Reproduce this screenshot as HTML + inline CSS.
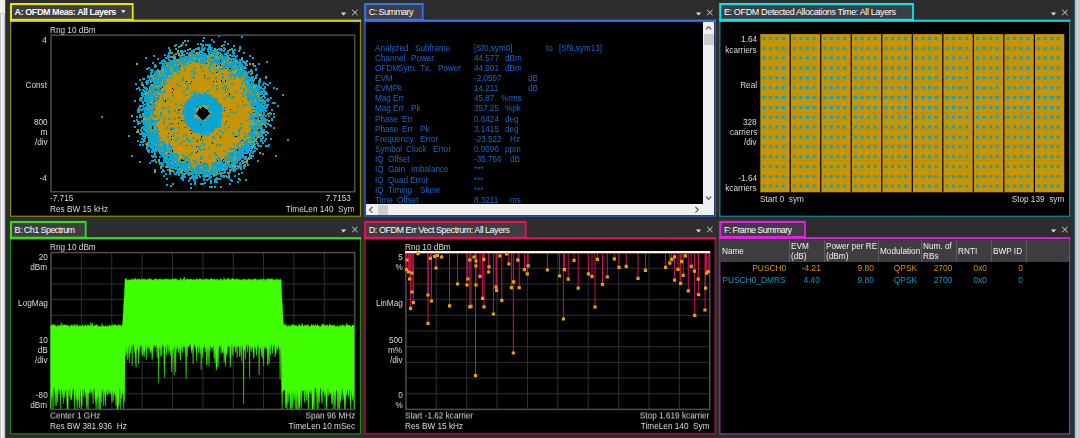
<!DOCTYPE html>
<html lang="en"><head><meta charset="utf-8"><title>OFDM measurement</title>
<style>
html,body{margin:0;padding:0;}
body{width:1080px;height:438px;overflow:hidden;background:#2d2d30;position:relative;
 font-family:"Liberation Sans",sans-serif;}
.b{position:absolute;}
.t{position:absolute;white-space:pre;font-family:"Liberation Sans",sans-serif;}
.tab{letter-spacing:-0.05px;}
svg{display:block;overflow:visible;}
</style></head><body>
<div class="b" style="left:0px;top:0px;width:4.9px;height:438px;background:linear-gradient(90deg,#bdbdbd 0%,#c4c4c4 18%,#f2f2f2 30%,#f3f3f3 66%,#c2c6c8 80%,#b8c0c4 100%);"></div>
<div class="b" style="left:0px;top:0px;width:4.9px;height:13.4px;background:linear-gradient(90deg,#f2f2f2,#ececec);"></div>
<div class="b" style="left:0px;top:13.4px;width:4.9px;height:0.9px;background:#cfcfcf;"></div>
<div class="b" style="left:4.9px;top:0px;width:1.0px;height:438px;background:#1f6272;"></div>
<div class="b" style="left:1074.1px;top:0px;width:1.0px;height:438px;background:#1f6272;"></div>
<div class="b" style="left:1075.1px;top:0px;width:4.9px;height:438px;background:linear-gradient(90deg,#b6b6b6 0%,#bcbcbc 25%,#dadada 40%,#d6d6d6 60%,#c2c2c2 75%,#c6c6c6 100%);"></div>
<svg class="b" style="left:0;top:0" width="1080" height="438" viewBox="0 0 1080 438"><rect x="10" y="19.6" width="351" height="197.20" fill="#8c8c00"/><rect x="11.15" y="19.6" width="348.7" height="196.05" fill="#000"/><rect x="10" y="19.6" width="351" height="2.3" fill="#d2d200"/><rect x="9.9" y="3.0" width="123.7" height="17.8" fill="#e6e600"/><rect x="12.0" y="5.1" width="119.8" height="14.8" fill="#3d3e45"/><rect x="9.9" y="18.8" width="123.7" height="2.1" fill="#e6e600"/></svg>
<span class="t tab" style="top:6.80px;color:#ffffff;font-size:9.0px;line-height:10px;font-weight:bold;left:14.60px;letter-spacing:-0.437px;">A: OFDM Meas: All Layers</span>
<svg class="b" style="left:338.15px;top:7.4px" width="22" height="12" viewBox="0 0 22 12"><path d="M2.85 5.4h5.4l-2.7 3.0z" fill="#dcdcdc"/><path d="M14.1 2.8l5.5 5.4M19.6 2.8l-5.5 5.4" stroke="#d6d6d6" stroke-width="1.0" fill="none"/></svg>
<svg class="b" style="left:120px;top:8.7px" width="8" height="6"><path d="M0.9 1.2h4.8l-2.4 2.9z" fill="#f4f4f4"/></svg>
<svg class="b" style="left:0;top:0" width="1080" height="438" viewBox="0 0 1080 438" shape-rendering="crispEdges">
<path d="M218 36.5h2M241 36.5h2M203 37.5h2M241 37.5h2M203 38.5h2M211 39.5h2M187 40.5h2M202 40.5h2M211 40.5h2M187 41.5h2M202 41.5h2M213 41.5h2M224 41.5h2M182 42.5h2M213 42.5h2M224 42.5h2M182 43.5h2M197 43.5h2M200 43.5h2M227 43.5h2M175 44.5h2M181 44.5h2M185 44.5h2M197 44.5h2M200 44.5h4M205 44.5h6M223 44.5h2M227 44.5h2M174 45.5h3M182 45.5h1M185 45.5h2M201 45.5h3M205 45.5h6M223 45.5h2M233 45.5h2M174 46.5h2M178 46.5h2M202 46.5h2M208 46.5h3M233 46.5h2M239 46.5h2M168 47.5h2M178 47.5h2M197 47.5h3M201 47.5h2M204 47.5h2M208 47.5h5M223 47.5h2M239 47.5h2M168 48.5h2M175 48.5h2M195 48.5h5M201 48.5h5M207 48.5h6M218 48.5h4M223 48.5h3M231 48.5h2M239 48.5h2M169 49.5h2M175 49.5h2M187 49.5h2M193 49.5h7M201 49.5h4M207 49.5h5M216 49.5h7M224 49.5h2M231 49.5h2M234 49.5h2M239 49.5h2M169 50.5h2M180 50.5h3M184 50.5h2M187 50.5h2M191 50.5h4M199 50.5h6M207 50.5h2M210 50.5h8M219 50.5h6M227 50.5h2M232 50.5h4M238 50.5h2M169 51.5h2M180 51.5h6M191 51.5h4M199 51.5h4M207 51.5h4M212 51.5h7M223 51.5h2M227 51.5h2M232 51.5h2M238 51.5h2M168 52.5h3M177 52.5h2M180 52.5h4M186 52.5h2M189 52.5h6M200 52.5h4M208 52.5h13M226 52.5h3M232 52.5h3M243 52.5h2M168 53.5h3M175 53.5h5M181 53.5h2M186 53.5h7M195 53.5h1M202 53.5h4M208 53.5h2M211 53.5h6M219 53.5h2M224 53.5h5M232 53.5h3M243 53.5h2M164 54.5h2M168 54.5h2M173 54.5h4M183 54.5h2M188 54.5h1M191 54.5h2M195 54.5h12M208 54.5h2M212 54.5h5M221 54.5h2M224 54.5h4M229 54.5h2M233 54.5h2M153 55.5h2M164 55.5h2M167 55.5h3M173 55.5h2M180 55.5h1M183 55.5h2M188 55.5h1M191 55.5h19M214 55.5h4M219 55.5h1M221 55.5h2M226 55.5h9M236 55.5h2M249 55.5h2M153 56.5h2M167 56.5h5M174 56.5h2M179 56.5h3M183 56.5h7M191 56.5h16M210 56.5h2M213 56.5h2M217 56.5h12M231 56.5h7M249 56.5h2M145 57.5h2M165 57.5h7M180 57.5h13M195 57.5h6M202 57.5h5M209 57.5h3M213 57.5h2M219 57.5h9M235 57.5h2M252 57.5h2M145 58.5h2M157 58.5h2M165 58.5h4M173 58.5h1M179 58.5h14M195 58.5h4M201 58.5h2M204 58.5h4M209 58.5h8M219 58.5h9M230 58.5h6M252 58.5h2M157 59.5h2M163 59.5h2M168 59.5h2M173 59.5h4M179 59.5h5M185 59.5h10M196 59.5h3M200 59.5h8M209 59.5h2M212 59.5h15M229 59.5h1M231 59.5h7M239 59.5h4M161 60.5h5M168 60.5h9M179 60.5h5M185 60.5h4M190 60.5h9M200 60.5h5M208 60.5h2M213 60.5h6M221 60.5h6M230 60.5h2M233 60.5h2M236 60.5h2M239 60.5h5M246 60.5h2M161 61.5h5M169 61.5h13M183 61.5h5M193 61.5h4M199 61.5h2M202 61.5h5M208 61.5h12M221 61.5h3M226 61.5h9M237 61.5h4M242 61.5h6M266 61.5h2M152 62.5h2M159 62.5h4M164 62.5h4M169 62.5h6M176 62.5h4M181 62.5h6M189 62.5h2M195 62.5h2M199 62.5h8M210 62.5h13M225 62.5h4M231 62.5h16M266 62.5h2M152 63.5h2M159 63.5h20M180 63.5h5M189 63.5h2M200 63.5h6M207 63.5h1M210 63.5h4M215 63.5h7M223 63.5h5M229 63.5h13M244 63.5h2M258 63.5h2M154 64.5h2M162 64.5h3M167 64.5h7M175 64.5h2M179 64.5h3M183 64.5h2M186 64.5h1M193 64.5h1M204 64.5h2M209 64.5h3M217 64.5h3M223 64.5h14M238 64.5h5M245 64.5h3M258 64.5h2M154 65.5h3M162 65.5h5M168 65.5h6M176 65.5h1M179 65.5h3M183 65.5h2M186 65.5h1M210 65.5h2M213 65.5h2M219 65.5h1M221 65.5h22M245 65.5h3M253 65.5h3M154 66.5h3M161 66.5h7M169 66.5h2M172 66.5h7M180 66.5h1M183 66.5h1M186 66.5h1M200 66.5h2M210 66.5h2M213 66.5h2M216 66.5h1M222 66.5h12M236 66.5h10M253 66.5h3M148 67.5h2M154 67.5h2M161 67.5h10M172 67.5h8M185 67.5h1M194 67.5h2M200 67.5h2M208 67.5h2M222 67.5h12M235 67.5h12M146 68.5h4M161 68.5h9M173 68.5h7M194 68.5h2M208 68.5h2M219 68.5h5M231 68.5h9M242 68.5h5M255 68.5h2M146 69.5h2M150 69.5h4M157 69.5h2M161 69.5h1M164 69.5h6M172 69.5h9M184 69.5h2M215 69.5h2M220 69.5h4M227 69.5h9M238 69.5h2M242 69.5h2M250 69.5h2M255 69.5h2M150 70.5h4M156 70.5h6M164 70.5h13M178 70.5h2M184 70.5h2M191 70.5h2M202 70.5h2M209 70.5h2M215 70.5h4M227 70.5h7M237 70.5h9M250 70.5h3M255 70.5h2M151 71.5h2M154 71.5h4M160 71.5h1M163 71.5h8M173 71.5h4M191 71.5h2M194 71.5h2M202 71.5h2M209 71.5h2M217 71.5h2M228 71.5h4M237 71.5h10M248 71.5h5M150 72.5h3M154 72.5h4M160 72.5h1M163 72.5h8M173 72.5h1M177 72.5h2M194 72.5h2M212 72.5h2M236 72.5h3M240 72.5h4M245 72.5h5M150 73.5h2M154 73.5h9M164 73.5h9M177 73.5h2M193 73.5h2M212 73.5h2M221 73.5h2M228 73.5h1M231 73.5h2M234 73.5h10M245 73.5h4M250 73.5h1M150 74.5h2M153 74.5h6M161 74.5h12M193 74.5h2M221 74.5h3M230 74.5h3M234 74.5h14M250 74.5h2M256 74.5h2M147 75.5h2M150 75.5h1M153 75.5h6M161 75.5h2M166 75.5h2M224 75.5h1M228 75.5h9M238 75.5h7M246 75.5h2M255 75.5h3M147 76.5h4M153 76.5h15M172 76.5h1M191 76.5h2M222 76.5h2M228 76.5h2M234 76.5h2M238 76.5h4M243 76.5h2M246 76.5h3M251 76.5h3M255 76.5h2M147 77.5h21M170 77.5h1M182 77.5h2M191 77.5h4M204 77.5h2M207 77.5h3M215 77.5h2M222 77.5h2M230 77.5h2M234 77.5h2M238 77.5h4M243 77.5h1M245 77.5h9M142 78.5h3M148 78.5h2M151 78.5h2M155 78.5h3M159 78.5h8M169 78.5h2M182 78.5h2M193 78.5h2M204 78.5h2M207 78.5h3M215 78.5h2M222 78.5h2M230 78.5h2M233 78.5h2M243 78.5h1M245 78.5h10M259 78.5h2M265 78.5h2M139 79.5h2M142 79.5h3M149 79.5h4M154 79.5h4M159 79.5h6M182 79.5h2M228 79.5h2M233 79.5h2M240 79.5h1M243 79.5h12M259 79.5h2M139 80.5h2M146 80.5h16M163 80.5h3M182 80.5h2M228 80.5h2M243 80.5h4M248 80.5h5M258 80.5h3M145 81.5h4M150 81.5h12M163 81.5h3M237 81.5h1M242 81.5h2M245 81.5h2M248 81.5h6M258 81.5h3M141 82.5h2M145 82.5h4M150 82.5h2M153 82.5h8M163 82.5h2M166 82.5h2M185 82.5h2M222 82.5h2M242 82.5h1M245 82.5h2M248 82.5h2M251 82.5h3M258 82.5h3M263 82.5h2M269 82.5h2M135 83.5h2M141 83.5h2M146 83.5h3M153 83.5h8M163 83.5h3M176 83.5h2M185 83.5h2M222 83.5h2M231 83.5h2M241 83.5h2M245 83.5h2M249 83.5h5M258 83.5h2M263 83.5h4M269 83.5h2M135 84.5h2M141 84.5h1M146 84.5h2M150 84.5h1M153 84.5h8M163 84.5h3M176 84.5h2M187 84.5h2M231 84.5h2M241 84.5h2M245 84.5h12M258 84.5h2M262 84.5h2M265 84.5h4M141 85.5h1M150 85.5h1M153 85.5h6M160 85.5h1M162 85.5h2M178 85.5h2M187 85.5h2M212 85.5h2M216 85.5h2M224 85.5h2M245 85.5h8M255 85.5h5M262 85.5h2M267 85.5h2M143 86.5h2M149 86.5h6M160 86.5h1M162 86.5h2M178 86.5h2M212 86.5h2M216 86.5h2M224 86.5h3M247 86.5h2M250 86.5h3M256 86.5h6M264 86.5h2M138 87.5h2M143 87.5h4M149 87.5h5M155 87.5h7M187 87.5h2M222 87.5h2M225 87.5h2M240 87.5h2M245 87.5h1M247 87.5h2M250 87.5h3M256 87.5h6M264 87.5h2M273 87.5h2M136 88.5h4M144 88.5h4M149 88.5h5M155 88.5h5M186 88.5h3M216 88.5h2M222 88.5h2M227 88.5h2M240 88.5h2M243 88.5h2M247 88.5h6M255 88.5h11M273 88.5h2M276 88.5h2M136 89.5h2M139 89.5h2M142 89.5h2M145 89.5h3M149 89.5h6M156 89.5h5M186 89.5h2M216 89.5h2M227 89.5h2M243 89.5h2M249 89.5h3M253 89.5h7M262 89.5h3M276 89.5h2M139 90.5h2M142 90.5h3M146 90.5h3M151 90.5h10M163 90.5h2M207 90.5h2M244 90.5h2M249 90.5h10M260 90.5h2M263 90.5h2M143 91.5h4M148 91.5h1M150 91.5h11M163 91.5h3M183 91.5h2M195 91.5h2M207 91.5h2M225 91.5h2M235 91.5h2M243 91.5h2M247 91.5h20M141 92.5h2M144 92.5h3M149 92.5h7M158 92.5h5M164 92.5h2M183 92.5h2M191 92.5h2M194 92.5h3M204 92.5h2M225 92.5h2M235 92.5h2M243 92.5h2M247 92.5h2M252 92.5h15M141 93.5h4M148 93.5h7M161 93.5h2M191 93.5h2M194 93.5h2M198 93.5h2M204 93.5h2M241 93.5h2M246 93.5h3M250 93.5h7M259 93.5h4M264 93.5h4M141 94.5h4M147 94.5h6M155 94.5h3M185 94.5h2M194 94.5h3M198 94.5h12M241 94.5h2M246 94.5h6M253 94.5h3M259 94.5h9M282 94.5h2M141 95.5h3M145 95.5h15M172 95.5h2M185 95.5h2M193 95.5h19M227 95.5h3M243 95.5h2M246 95.5h6M253 95.5h5M263 95.5h2M282 95.5h2M142 96.5h13M158 96.5h2M172 96.5h2M191 96.5h7M199 96.5h13M227 96.5h3M232 96.5h2M243 96.5h2M247 96.5h11M261 96.5h4M141 97.5h2M144 97.5h7M153 97.5h4M162 97.5h2M190 97.5h22M213 97.5h2M231 97.5h3M247 97.5h4M252 97.5h8M261 97.5h2M264 97.5h2M270 97.5h2M139 98.5h1M141 98.5h2M144 98.5h14M162 98.5h2M167 98.5h2M190 98.5h27M223 98.5h2M231 98.5h2M247 98.5h8M256 98.5h6M264 98.5h2M267 98.5h2M270 98.5h2M139 99.5h3M144 99.5h10M156 99.5h2M167 99.5h2M187 99.5h30M223 99.5h2M247 99.5h15M263 99.5h1M266 99.5h4M134 100.5h2M139 100.5h4M144 100.5h7M155 100.5h3M163 100.5h2M187 100.5h31M248 100.5h2M252 100.5h2M256 100.5h6M263 100.5h7M134 101.5h2M141 101.5h10M152 101.5h5M158 101.5h1M163 101.5h2M186 101.5h32M248 101.5h2M251 101.5h3M256 101.5h4M261 101.5h5M267 101.5h2M142 102.5h2M146 102.5h4M152 102.5h3M186 102.5h32M251 102.5h9M261 102.5h5M272 102.5h4M142 103.5h2M145 103.5h6M153 103.5h2M175 103.5h2M184 103.5h36M250 103.5h16M272 103.5h4M143 104.5h7M151 104.5h5M175 104.5h2M180 104.5h2M184 104.5h38M245 104.5h2M250 104.5h13M264 104.5h5M139 105.5h6M149 105.5h3M154 105.5h2M180 105.5h2M183 105.5h2M186 105.5h17M205 105.5h2M209 105.5h13M237 105.5h2M242 105.5h2M245 105.5h2M251 105.5h3M256 105.5h13M277 105.5h2M139 106.5h5M145 106.5h11M167 106.5h2M183 106.5h14M198 106.5h1M201 106.5h1M206 106.5h1M209 106.5h12M237 106.5h2M242 106.5h2M251 106.5h2M256 106.5h9M266 106.5h2M277 106.5h2M138 107.5h3M143 107.5h7M152 107.5h4M162 107.5h3M167 107.5h2M184 107.5h13M201 107.5h1M208 107.5h13M224 107.5h2M255 107.5h13M138 108.5h2M142 108.5h6M149 108.5h2M153 108.5h1M162 108.5h3M183 108.5h14M200 108.5h1M208 108.5h15M224 108.5h2M254 108.5h13M137 109.5h11M149 109.5h5M183 109.5h12M207 109.5h16M251 109.5h5M257 109.5h9M271 109.5h2M137 110.5h6M144 110.5h10M156 110.5h1M168 110.5h2M174 110.5h2M182 110.5h2M185 110.5h10M208 110.5h15M251 110.5h3M255 110.5h12M271 110.5h2M137 111.5h3M144 111.5h10M168 111.5h2M174 111.5h2M182 111.5h16M208 111.5h2M212 111.5h11M231 111.5h2M248 111.5h2M255 111.5h9M265 111.5h2M137 112.5h3M144 112.5h9M160 112.5h2M168 112.5h2M177 112.5h2M182 112.5h15M209 112.5h1M212 112.5h10M231 112.5h2M234 112.5h2M248 112.5h2M254 112.5h8M263 112.5h2M269 112.5h2M144 113.5h10M160 113.5h2M177 113.5h2M182 113.5h14M210 113.5h12M234 113.5h2M249 113.5h1M251 113.5h2M255 113.5h7M263 113.5h2M269 113.5h3M273 113.5h2M139 114.5h2M144 114.5h10M160 114.5h2M183 114.5h13M209 114.5h13M250 114.5h3M256 114.5h2M261 114.5h4M270 114.5h2M273 114.5h2M139 115.5h2M142 115.5h9M153 115.5h4M160 115.5h1M184 115.5h10M209 115.5h13M227 115.5h2M250 115.5h2M253 115.5h2M256 115.5h3M261 115.5h6M268 115.5h2M101 116.5h2M136 116.5h2M139 116.5h11M153 116.5h4M159 116.5h3M184 116.5h10M197 116.5h2M209 116.5h14M227 116.5h2M252 116.5h12M265 116.5h2M268 116.5h2M273 116.5h2M101 117.5h2M136 117.5h2M139 117.5h3M143 117.5h1M146 117.5h4M151 117.5h1M153 117.5h3M163 117.5h2M179 117.5h2M185 117.5h9M196 117.5h1M199 117.5h1M206 117.5h1M209 117.5h14M249 117.5h10M260 117.5h5M273 117.5h2M146 118.5h2M150 118.5h1M163 118.5h2M168 118.5h2M174 118.5h2M179 118.5h2M185 118.5h12M199 118.5h2M205 118.5h17M249 118.5h6M257 118.5h2M262 118.5h4M271 118.5h2M136 119.5h2M147 119.5h1M150 119.5h3M158 119.5h2M168 119.5h2M174 119.5h2M184 119.5h18M206 119.5h15M245 119.5h2M249 119.5h6M256 119.5h3M261 119.5h7M271 119.5h2M133 120.5h2M136 120.5h2M141 120.5h4M146 120.5h3M150 120.5h10M182 120.5h22M206 120.5h15M245 120.5h2M252 120.5h6M260 120.5h8M271 120.5h2M133 121.5h2M137 121.5h3M141 121.5h8M150 121.5h8M163 121.5h2M182 121.5h39M254 121.5h2M260 121.5h6M137 122.5h4M142 122.5h4M147 122.5h10M163 122.5h2M185 122.5h36M250 122.5h1M254 122.5h13M137 123.5h4M143 123.5h4M148 123.5h5M163 123.5h2M169 123.5h2M185 123.5h36M224 123.5h2M240 123.5h2M257 123.5h4M263 123.5h6M137 124.5h2M143 124.5h10M154 124.5h2M169 124.5h2M187 124.5h13M201 124.5h20M224 124.5h2M240 124.5h2M254 124.5h2M257 124.5h3M263 124.5h3M267 124.5h4M144 125.5h5M151 125.5h5M187 125.5h34M250 125.5h2M254 125.5h5M260 125.5h3M264 125.5h3M269 125.5h3M134 126.5h2M142 126.5h7M151 126.5h1M153 126.5h2M187 126.5h34M228 126.5h2M248 126.5h14M265 126.5h2M270 126.5h2M134 127.5h2M141 127.5h11M153 127.5h2M156 127.5h2M166 127.5h2M171 127.5h2M178 127.5h2M190 127.5h28M219 127.5h2M228 127.5h2M240 127.5h3M251 127.5h12M265 127.5h2M273 127.5h2M141 128.5h11M153 128.5h2M156 128.5h3M166 128.5h2M169 128.5h6M178 128.5h2M191 128.5h24M240 128.5h2M251 128.5h5M257 128.5h6M273 128.5h2M137 129.5h2M140 129.5h2M143 129.5h12M156 129.5h2M169 129.5h2M173 129.5h2M191 129.5h24M225 129.5h2M238 129.5h2M252 129.5h2M255 129.5h4M260 129.5h5M137 130.5h2M140 130.5h2M143 130.5h2M147 130.5h3M153 130.5h2M156 130.5h2M191 130.5h23M219 130.5h2M225 130.5h2M238 130.5h2M252 130.5h6M260 130.5h5M141 131.5h2M147 131.5h3M151 131.5h4M156 131.5h4M192 131.5h22M219 131.5h2M238 131.5h2M251 131.5h4M256 131.5h6M264 131.5h4M141 132.5h4M146 132.5h12M177 132.5h2M193 132.5h2M196 132.5h15M222 132.5h2M232 132.5h2M238 132.5h2M249 132.5h6M257 132.5h5M264 132.5h5M139 133.5h19M172 133.5h2M177 133.5h2M199 133.5h4M204 133.5h3M216 133.5h2M222 133.5h2M232 133.5h2M244 133.5h2M248 133.5h7M258 133.5h7M267 133.5h2M139 134.5h20M172 134.5h2M185 134.5h2M201 134.5h2M204 134.5h5M216 134.5h2M238 134.5h2M244 134.5h2M248 134.5h8M258 134.5h5M265 134.5h2M128 135.5h2M142 135.5h17M173 135.5h2M182 135.5h2M185 135.5h2M201 135.5h3M207 135.5h2M220 135.5h2M233 135.5h2M238 135.5h2M247 135.5h2M250 135.5h13M265 135.5h2M128 136.5h2M142 136.5h4M147 136.5h12M167 136.5h2M173 136.5h2M182 136.5h2M202 136.5h2M212 136.5h2M220 136.5h2M233 136.5h2M237 136.5h1M244 136.5h2M247 136.5h2M251 136.5h3M255 136.5h3M260 136.5h4M143 137.5h3M147 137.5h14M167 137.5h2M177 137.5h2M186 137.5h2M192 137.5h2M212 137.5h3M244 137.5h2M251 137.5h3M256 137.5h2M262 137.5h2M141 138.5h2M144 138.5h2M148 138.5h8M157 138.5h2M161 138.5h2M177 138.5h2M186 138.5h2M192 138.5h2M213 138.5h2M250 138.5h8M260 138.5h4M265 138.5h2M270 138.5h2M141 139.5h2M148 139.5h12M175 139.5h2M187 139.5h2M196 139.5h2M201 139.5h2M242 139.5h1M246 139.5h3M250 139.5h5M260 139.5h2M265 139.5h2M270 139.5h2M287 139.5h2M137 140.5h2M144 140.5h2M148 140.5h12M169 140.5h2M175 140.5h2M183 140.5h2M187 140.5h4M196 140.5h2M201 140.5h2M240 140.5h2M246 140.5h9M260 140.5h3M264 140.5h2M287 140.5h2M137 141.5h2M140 141.5h6M148 141.5h10M161 141.5h3M169 141.5h2M183 141.5h2M189 141.5h2M211 141.5h2M240 141.5h2M244 141.5h4M252 141.5h1M255 141.5h3M260 141.5h3M264 141.5h2M140 142.5h4M149 142.5h17M189 142.5h2M211 142.5h2M239 142.5h2M243 142.5h5M252 142.5h1M256 142.5h2M262 142.5h2M145 143.5h2M148 143.5h2M153 143.5h8M163 143.5h2M168 143.5h2M180 143.5h2M202 143.5h2M233 143.5h2M237 143.5h4M243 143.5h16M262 143.5h2M139 144.5h2M142 144.5h2M145 144.5h1M148 144.5h7M157 144.5h2M163 144.5h4M168 144.5h2M180 144.5h2M202 144.5h3M216 144.5h2M219 144.5h2M233 144.5h2M237 144.5h2M244 144.5h3M248 144.5h5M254 144.5h2M257 144.5h2M268 144.5h2M139 145.5h2M142 145.5h2M148 145.5h13M162 145.5h5M169 145.5h2M191 145.5h2M199 145.5h2M203 145.5h2M216 145.5h2M219 145.5h2M236 145.5h3M241 145.5h2M244 145.5h6M251 145.5h2M254 145.5h1M257 145.5h5M265 145.5h5M146 146.5h15M162 146.5h5M168 146.5h5M191 146.5h2M198 146.5h3M236 146.5h2M241 146.5h2M244 146.5h8M254 146.5h2M258 146.5h4M265 146.5h4M146 147.5h3M150 147.5h4M155 147.5h6M162 147.5h5M168 147.5h2M171 147.5h2M198 147.5h2M208 147.5h2M238 147.5h2M241 147.5h11M254 147.5h2M146 148.5h2M150 148.5h17M170 148.5h2M198 148.5h2M203 148.5h2M208 148.5h2M229 148.5h7M238 148.5h15M254 148.5h4M146 149.5h4M152 149.5h5M158 149.5h11M170 149.5h2M198 149.5h4M203 149.5h2M229 149.5h8M238 149.5h10M251 149.5h2M256 149.5h2M147 150.5h3M151 150.5h11M163 150.5h9M200 150.5h2M223 150.5h2M235 150.5h2M238 150.5h3M242 150.5h10M253 150.5h3M147 151.5h3M151 151.5h6M159 151.5h3M163 151.5h4M169 151.5h3M223 151.5h2M233 151.5h10M245 151.5h4M250 151.5h6M148 152.5h2M151 152.5h2M154 152.5h2M159 152.5h6M169 152.5h2M172 152.5h2M191 152.5h2M214 152.5h2M229 152.5h6M236 152.5h2M239 152.5h10M250 152.5h4M154 153.5h2M159 153.5h6M167 153.5h1M169 153.5h2M172 153.5h5M191 153.5h2M214 153.5h2M228 153.5h3M232 153.5h2M236 153.5h12M249 153.5h2M252 153.5h2M262 153.5h2M154 154.5h2M160 154.5h6M167 154.5h12M182 154.5h2M189 154.5h2M215 154.5h2M226 154.5h15M242 154.5h2M250 154.5h2M262 154.5h2M131 155.5h2M151 155.5h5M161 155.5h13M175 155.5h4M182 155.5h3M189 155.5h2M209 155.5h2M215 155.5h2M226 155.5h2M229 155.5h15M250 155.5h4M275 155.5h2M131 156.5h2M151 156.5h6M159 156.5h2M162 156.5h13M176 156.5h3M183 156.5h2M186 156.5h2M200 156.5h3M209 156.5h2M217 156.5h2M224 156.5h2M227 156.5h1M229 156.5h6M236 156.5h11M249 156.5h5M275 156.5h2M152 157.5h2M155 157.5h2M159 157.5h2M163 157.5h5M169 157.5h9M184 157.5h4M201 157.5h2M217 157.5h3M224 157.5h7M232 157.5h2M236 157.5h11M249 157.5h3M163 158.5h11M175 158.5h3M183 158.5h3M188 158.5h2M200 158.5h2M216 158.5h4M225 158.5h3M229 158.5h4M236 158.5h6M243 158.5h5M250 158.5h2M154 159.5h2M163 159.5h15M182 159.5h8M200 159.5h2M216 159.5h2M219 159.5h2M222 159.5h1M224 159.5h2M227 159.5h6M235 159.5h6M244 159.5h6M151 160.5h5M163 160.5h7M171 160.5h6M179 160.5h2M184 160.5h4M193 160.5h2M219 160.5h2M224 160.5h9M235 160.5h5M241 160.5h3M257 160.5h2M139 161.5h2M151 161.5h3M155 161.5h2M158 161.5h2M163 161.5h11M176 161.5h2M179 161.5h7M188 161.5h3M193 161.5h4M198 161.5h1M216 161.5h7M224 161.5h3M231 161.5h8M241 161.5h5M257 161.5h2M139 162.5h2M149 162.5h2M155 162.5h2M158 162.5h17M176 162.5h6M185 162.5h2M188 162.5h3M195 162.5h2M203 162.5h2M211 162.5h1M214 162.5h3M218 162.5h1M220 162.5h3M229 162.5h1M231 162.5h7M239 162.5h2M244 162.5h4M149 163.5h2M159 163.5h4M166 163.5h5M173 163.5h15M190 163.5h1M193 163.5h2M201 163.5h8M211 163.5h6M219 163.5h6M226 163.5h4M231 163.5h7M239 163.5h5M246 163.5h2M159 164.5h5M166 164.5h11M179 164.5h13M193 164.5h2M197 164.5h2M201 164.5h7M211 164.5h25M239 164.5h3M244 164.5h2M247 164.5h2M161 165.5h3M166 165.5h21M188 165.5h3M197 165.5h12M212 165.5h11M225 165.5h7M236 165.5h5M244 165.5h2M247 165.5h2M162 166.5h2M165 166.5h1M168 166.5h15M184 166.5h4M190 166.5h2M195 166.5h7M203 166.5h6M212 166.5h11M224 166.5h8M236 166.5h6M245 166.5h1M165 167.5h1M168 167.5h7M176 167.5h2M179 167.5h9M190 167.5h3M195 167.5h5M202 167.5h7M210 167.5h4M215 167.5h13M229 167.5h5M237 167.5h5M243 167.5h2M160 168.5h2M169 168.5h10M180 168.5h5M186 168.5h4M191 168.5h3M195 168.5h6M202 168.5h7M211 168.5h3M215 168.5h8M224 168.5h4M231 168.5h8M240 168.5h2M243 168.5h2M154 169.5h2M162 169.5h2M167 169.5h4M175 169.5h4M180 169.5h2M183 169.5h2M186 169.5h8M195 169.5h14M211 169.5h3M215 169.5h7M224 169.5h4M229 169.5h8M240 169.5h2M154 170.5h2M162 170.5h3M167 170.5h2M173 170.5h1M177 170.5h4M183 170.5h5M189 170.5h15M206 170.5h2M209 170.5h17M229 170.5h7M161 171.5h4M173 171.5h2M176 171.5h5M182 171.5h1M184 171.5h5M191 171.5h4M197 171.5h11M209 171.5h3M214 171.5h2M217 171.5h3M224 171.5h2M229 171.5h2M233 171.5h3M161 172.5h2M169 172.5h2M173 172.5h2M176 172.5h4M182 172.5h1M185 172.5h15M201 172.5h15M219 172.5h7M229 172.5h2M241 172.5h2M165 173.5h2M169 173.5h2M174 173.5h16M191 173.5h6M198 173.5h2M201 173.5h24M229 173.5h1M238 173.5h2M241 173.5h2M165 174.5h2M169 174.5h2M174 174.5h3M178 174.5h2M182 174.5h4M187 174.5h3M191 174.5h3M195 174.5h2M198 174.5h2M202 174.5h11M215 174.5h4M228 174.5h2M238 174.5h2M163 175.5h2M178 175.5h2M181 175.5h4M188 175.5h2M192 175.5h8M202 175.5h4M208 175.5h3M215 175.5h2M220 175.5h7M228 175.5h2M234 175.5h2M163 176.5h2M181 176.5h5M191 176.5h7M199 176.5h2M202 176.5h4M208 176.5h4M213 176.5h2M220 176.5h10M234 176.5h2M180 177.5h6M189 177.5h9M199 177.5h2M204 177.5h2M209 177.5h3M216 177.5h2M223 177.5h2M226 177.5h4M166 178.5h2M180 178.5h4M189 178.5h9M203 178.5h2M208 178.5h3M215 178.5h6M228 178.5h2M238 178.5h2M166 179.5h2M182 179.5h2M189 179.5h2M193 179.5h3M203 179.5h2M206 179.5h4M214 179.5h7M230 179.5h2M238 179.5h3M245 179.5h2M182 180.5h2M188 180.5h2M193 180.5h2M203 180.5h2M206 180.5h2M210 180.5h2M214 180.5h3M230 180.5h3M239 180.5h2M245 180.5h2M188 181.5h2M194 181.5h2M210 181.5h2M214 181.5h4M231 181.5h2M237 181.5h2M194 182.5h2M204 182.5h2M210 182.5h2M214 182.5h4M237 182.5h2M172 183.5h2M190 183.5h2M194 183.5h2M200 183.5h6M210 183.5h2M229 183.5h2M166 184.5h2M172 184.5h2M190 184.5h2M194 184.5h2M200 184.5h4M229 184.5h2M166 185.5h2M170 185.5h2M170 186.5h2M209 186.5h4M214 186.5h2M220 186.5h2M190 187.5h2M209 187.5h4M214 187.5h2M220 187.5h2M190 188.5h2" stroke="#08a5d2" stroke-width="1" fill="none"/>
<path d="M184 40.5h2M184 41.5h2M180 45.5h2M221 45.5h2M180 46.5h2M221 46.5h2M189 48.5h2M214 48.5h2M189 49.5h2M214 49.5h2M229 49.5h2M177 50.5h2M229 50.5h2M177 51.5h2M171 52.5h2M196 52.5h4M171 53.5h2M196 53.5h4M217 53.5h2M178 54.5h2M181 54.5h2M189 54.5h2M193 54.5h2M210 54.5h2M217 54.5h2M220 54.5h1M178 55.5h2M181 55.5h2M189 55.5h2M210 55.5h4M220 55.5h1M172 56.5h2M190 56.5h1M207 56.5h3M212 56.5h1M215 56.5h2M172 57.5h4M193 57.5h2M201 57.5h1M207 57.5h2M215 57.5h4M228 57.5h2M241 57.5h2M174 58.5h2M193 58.5h2M199 58.5h2M203 58.5h1M208 58.5h1M217 58.5h2M228 58.5h2M241 58.5h2M177 59.5h2M184 59.5h1M195 59.5h1M199 59.5h1M208 59.5h1M211 59.5h1M227 59.5h2M230 59.5h1M177 60.5h2M184 60.5h1M189 60.5h1M199 60.5h1M205 60.5h3M210 60.5h3M219 60.5h1M227 60.5h2M235 60.5h1M182 61.5h1M188 61.5h5M198 61.5h1M201 61.5h1M207 61.5h1M224 61.5h2M235 61.5h2M168 62.5h1M175 62.5h1M180 62.5h1M187 62.5h2M191 62.5h4M197 62.5h2M207 62.5h3M223 62.5h2M229 62.5h2M136 63.5h2M179 63.5h1M185 63.5h4M191 63.5h9M208 63.5h2M214 63.5h1M222 63.5h1M228 63.5h1M246 63.5h1M249 63.5h2M252 63.5h2M136 64.5h2M166 64.5h1M174 64.5h1M177 64.5h2M182 64.5h1M185 64.5h1M187 64.5h6M194 64.5h10M206 64.5h3M212 64.5h5M221 64.5h2M249 64.5h2M252 64.5h2M167 65.5h1M174 65.5h2M177 65.5h2M182 65.5h1M185 65.5h1M187 65.5h23M212 65.5h1M215 65.5h1M217 65.5h2M168 66.5h1M171 66.5h1M181 66.5h2M184 66.5h2M187 66.5h13M202 66.5h8M212 66.5h1M215 66.5h1M217 66.5h5M234 66.5h2M171 67.5h1M180 67.5h5M186 67.5h8M196 67.5h4M202 67.5h6M210 67.5h12M234 67.5h1M170 68.5h3M180 68.5h14M196 68.5h12M210 68.5h9M224 68.5h1M226 68.5h3M240 68.5h2M162 69.5h2M170 69.5h2M181 69.5h3M186 69.5h29M217 69.5h3M224 69.5h3M236 69.5h2M240 69.5h2M162 70.5h2M177 70.5h1M180 70.5h4M186 70.5h5M193 70.5h9M204 70.5h5M211 70.5h4M219 70.5h8M234 70.5h3M158 71.5h2M161 71.5h2M171 71.5h2M177 71.5h14M193 71.5h1M196 71.5h6M204 71.5h5M211 71.5h6M219 71.5h9M232 71.5h5M158 72.5h2M161 72.5h2M171 72.5h2M174 72.5h3M179 72.5h15M196 72.5h16M214 72.5h2M217 72.5h19M239 72.5h1M244 72.5h1M251 72.5h2M163 73.5h1M173 73.5h4M179 73.5h14M195 73.5h17M214 73.5h7M223 73.5h5M229 73.5h2M233 73.5h1M244 73.5h1M251 73.5h2M159 74.5h2M173 74.5h20M195 74.5h26M224 74.5h6M233 74.5h1M151 75.5h2M159 75.5h2M163 75.5h3M168 75.5h36M205 75.5h19M225 75.5h3M237 75.5h1M245 75.5h1M151 76.5h2M168 76.5h4M173 76.5h18M193 76.5h29M224 76.5h4M230 76.5h4M236 76.5h2M242 76.5h1M245 76.5h1M265 76.5h2M168 77.5h2M171 77.5h11M184 77.5h7M195 77.5h9M206 77.5h1M210 77.5h5M217 77.5h5M224 77.5h6M232 77.5h2M236 77.5h2M242 77.5h1M244 77.5h1M255 77.5h2M265 77.5h2M153 78.5h2M158 78.5h1M167 78.5h2M171 78.5h11M184 78.5h9M195 78.5h9M206 78.5h1M210 78.5h5M217 78.5h5M224 78.5h6M232 78.5h1M235 78.5h8M244 78.5h1M255 78.5h2M153 79.5h1M158 79.5h1M165 79.5h17M184 79.5h44M230 79.5h3M235 79.5h5M241 79.5h2M162 80.5h1M166 80.5h16M184 80.5h37M222 80.5h3M226 80.5h2M230 80.5h13M247 80.5h1M253 80.5h2M162 81.5h1M166 81.5h20M187 81.5h4M192 81.5h21M214 81.5h2M217 81.5h4M222 81.5h3M226 81.5h11M238 81.5h4M244 81.5h1M247 81.5h1M161 82.5h2M165 82.5h1M168 82.5h17M187 82.5h35M224 82.5h18M243 82.5h2M247 82.5h1M161 83.5h2M166 83.5h10M178 83.5h7M187 83.5h3M191 83.5h31M224 83.5h7M233 83.5h8M243 83.5h2M247 83.5h2M142 84.5h2M151 84.5h2M161 84.5h2M166 84.5h10M178 84.5h9M189 84.5h42M233 84.5h8M243 84.5h2M142 85.5h2M151 85.5h2M159 85.5h1M161 85.5h1M164 85.5h14M180 85.5h7M189 85.5h23M214 85.5h2M218 85.5h6M226 85.5h19M253 85.5h2M155 86.5h5M161 86.5h1M164 86.5h14M180 86.5h32M214 86.5h2M218 86.5h6M227 86.5h20M249 86.5h1M253 86.5h3M154 87.5h1M163 87.5h24M189 87.5h33M224 87.5h1M227 87.5h13M242 87.5h3M246 87.5h1M249 87.5h1M253 87.5h3M154 88.5h1M161 88.5h11M173 88.5h13M189 88.5h27M218 88.5h4M224 88.5h3M229 88.5h11M242 88.5h1M245 88.5h2M253 88.5h2M161 89.5h12M174 89.5h12M188 89.5h28M218 89.5h7M226 89.5h1M229 89.5h14M245 89.5h4M252 89.5h1M149 90.5h2M161 90.5h2M165 90.5h42M209 90.5h35M246 90.5h3M149 91.5h1M161 91.5h2M166 91.5h17M185 91.5h10M197 91.5h10M209 91.5h16M227 91.5h8M237 91.5h6M245 91.5h2M147 92.5h2M156 92.5h2M163 92.5h1M166 92.5h6M173 92.5h10M185 92.5h6M193 92.5h1M197 92.5h7M206 92.5h19M227 92.5h8M237 92.5h6M245 92.5h2M249 92.5h3M145 93.5h3M155 93.5h6M163 93.5h28M193 93.5h1M196 93.5h2M200 93.5h4M206 93.5h23M230 93.5h11M243 93.5h3M249 93.5h1M257 93.5h2M145 94.5h2M153 94.5h2M158 94.5h27M187 94.5h7M197 94.5h1M210 94.5h19M230 94.5h11M243 94.5h3M252 94.5h1M256 94.5h3M160 95.5h12M174 95.5h11M187 95.5h6M212 95.5h15M230 95.5h13M245 95.5h1M252 95.5h1M258 95.5h2M155 96.5h3M160 96.5h12M174 96.5h17M198 96.5h1M212 96.5h15M230 96.5h2M234 96.5h9M245 96.5h2M258 96.5h2M140 97.5h1M151 97.5h2M157 97.5h5M164 97.5h26M212 97.5h1M215 97.5h16M234 97.5h13M251 97.5h1M260 97.5h1M140 98.5h1M159 98.5h3M164 98.5h3M169 98.5h21M217 98.5h6M225 98.5h6M233 98.5h14M255 98.5h1M154 99.5h2M158 99.5h9M169 99.5h18M217 99.5h6M225 99.5h22M262 99.5h1M151 100.5h3M158 100.5h5M166 100.5h21M218 100.5h30M250 100.5h2M254 100.5h2M262 100.5h1M151 101.5h1M157 101.5h1M159 101.5h4M166 101.5h20M218 101.5h24M243 101.5h5M250 101.5h1M254 101.5h2M260 101.5h1M150 102.5h2M155 102.5h31M218 102.5h33M151 103.5h2M155 103.5h20M177 103.5h7M220 103.5h30M156 104.5h19M177 104.5h3M182 104.5h2M222 104.5h23M247 104.5h3M147 105.5h2M152 105.5h2M156 105.5h24M182 105.5h1M185 105.5h1M203 105.5h2M207 105.5h2M222 105.5h15M239 105.5h3M244 105.5h1M247 105.5h4M254 105.5h2M156 106.5h11M169 106.5h14M199 106.5h2M202 106.5h4M207 106.5h2M221 106.5h16M239 106.5h3M244 106.5h7M253 106.5h1M150 107.5h2M156 107.5h6M165 107.5h2M169 107.5h15M197 107.5h4M204 107.5h4M221 107.5h3M226 107.5h29M148 108.5h1M151 108.5h2M154 108.5h8M165 108.5h18M197 108.5h2M205 108.5h3M223 108.5h1M226 108.5h28M148 109.5h1M155 109.5h24M180 109.5h3M195 109.5h4M223 109.5h7M231 109.5h20M256 109.5h1M154 110.5h2M157 110.5h11M170 110.5h4M176 110.5h2M179 110.5h3M184 110.5h1M195 110.5h3M223 110.5h1M225 110.5h26M254 110.5h1M154 111.5h14M170 111.5h4M176 111.5h6M210 111.5h2M223 111.5h8M233 111.5h15M250 111.5h5M153 112.5h7M162 112.5h6M170 112.5h7M179 112.5h3M210 112.5h2M222 112.5h9M233 112.5h1M236 112.5h12M250 112.5h3M142 113.5h2M154 113.5h6M162 113.5h15M179 113.5h3M222 113.5h12M236 113.5h13M250 113.5h1M253 113.5h2M267 113.5h2M142 114.5h2M154 114.5h6M162 114.5h21M196 114.5h1M222 114.5h28M253 114.5h3M258 114.5h3M267 114.5h2M131 115.5h2M151 115.5h2M157 115.5h3M161 115.5h23M194 115.5h4M208 115.5h1M222 115.5h5M229 115.5h21M252 115.5h1M255 115.5h1M259 115.5h2M131 116.5h2M150 116.5h3M157 116.5h2M162 116.5h22M194 116.5h3M207 116.5h2M223 116.5h4M229 116.5h23M144 117.5h2M150 117.5h1M152 117.5h1M156 117.5h7M165 117.5h13M181 117.5h4M194 117.5h2M197 117.5h2M207 117.5h2M223 117.5h26M143 118.5h3M148 118.5h2M151 118.5h12M165 118.5h3M170 118.5h4M176 118.5h3M181 118.5h4M197 118.5h2M222 118.5h27M260 118.5h2M143 119.5h4M148 119.5h2M153 119.5h5M160 119.5h8M170 119.5h4M176 119.5h8M204 119.5h2M221 119.5h24M247 119.5h2M255 119.5h1M145 120.5h1M149 120.5h1M160 120.5h21M204 120.5h2M221 120.5h24M247 120.5h5M258 120.5h2M268 120.5h2M149 121.5h1M158 121.5h5M165 121.5h17M221 121.5h5M227 121.5h27M256 121.5h4M268 121.5h2M146 122.5h1M157 122.5h6M165 122.5h20M221 122.5h29M251 122.5h3M147 123.5h1M153 123.5h10M165 123.5h4M171 123.5h1M173 123.5h5M179 123.5h6M221 123.5h3M226 123.5h14M242 123.5h15M261 123.5h2M153 124.5h1M156 124.5h13M171 124.5h16M221 124.5h3M226 124.5h14M242 124.5h12M256 124.5h1M260 124.5h3M149 125.5h2M156 125.5h31M221 125.5h29M252 125.5h2M259 125.5h1M149 126.5h2M155 126.5h32M221 126.5h7M230 126.5h18M155 127.5h1M158 127.5h8M168 127.5h3M173 127.5h5M180 127.5h5M186 127.5h4M218 127.5h1M221 127.5h7M230 127.5h10M243 127.5h8M155 128.5h1M159 128.5h7M168 128.5h1M175 128.5h3M180 128.5h11M215 128.5h25M242 128.5h9M256 128.5h1M155 129.5h1M158 129.5h11M172 129.5h1M175 129.5h16M215 129.5h10M227 129.5h11M240 129.5h12M254 129.5h1M145 130.5h2M150 130.5h3M155 130.5h1M158 130.5h32M214 130.5h5M221 130.5h4M227 130.5h11M240 130.5h11M136 131.5h3M145 131.5h2M150 131.5h1M155 131.5h1M160 131.5h32M214 131.5h5M221 131.5h17M240 131.5h11M255 131.5h1M262 131.5h2M136 132.5h3M158 132.5h19M179 132.5h14M195 132.5h1M211 132.5h11M224 132.5h8M234 132.5h4M240 132.5h9M255 132.5h2M262 132.5h2M158 133.5h10M169 133.5h3M174 133.5h3M179 133.5h12M192 133.5h7M203 133.5h1M207 133.5h9M218 133.5h4M224 133.5h8M234 133.5h10M246 133.5h2M255 133.5h3M159 134.5h13M174 134.5h11M187 134.5h14M203 134.5h1M209 134.5h7M218 134.5h20M240 134.5h4M246 134.5h2M256 134.5h2M159 135.5h14M175 135.5h7M184 135.5h1M187 135.5h14M204 135.5h3M209 135.5h11M222 135.5h11M235 135.5h3M240 135.5h7M249 135.5h1M159 136.5h8M169 136.5h2M172 136.5h1M175 136.5h7M184 136.5h17M204 136.5h8M214 136.5h6M222 136.5h11M238 136.5h6M246 136.5h1M249 136.5h2M254 136.5h1M258 136.5h2M161 137.5h6M169 137.5h8M179 137.5h7M188 137.5h4M194 137.5h7M202 137.5h10M215 137.5h5M221 137.5h23M246 137.5h5M254 137.5h1M258 137.5h2M156 138.5h1M159 138.5h2M163 138.5h14M179 138.5h7M188 138.5h4M194 138.5h19M215 138.5h35M143 139.5h2M160 139.5h11M172 139.5h3M177 139.5h10M189 139.5h7M198 139.5h2M203 139.5h39M243 139.5h3M249 139.5h1M255 139.5h2M143 140.5h1M160 140.5h9M171 140.5h4M177 140.5h6M185 140.5h2M191 140.5h5M198 140.5h3M203 140.5h37M243 140.5h3M255 140.5h2M158 141.5h3M164 141.5h5M171 141.5h12M185 141.5h4M191 141.5h6M198 141.5h13M213 141.5h27M242 141.5h2M248 141.5h4M253 141.5h2M147 142.5h2M166 142.5h23M191 142.5h20M213 142.5h26M241 142.5h2M248 142.5h4M253 142.5h2M147 143.5h1M151 143.5h2M161 143.5h2M165 143.5h3M170 143.5h10M182 143.5h20M204 143.5h8M213 143.5h20M235 143.5h2M241 143.5h2M146 144.5h2M155 144.5h2M159 144.5h4M167 144.5h1M170 144.5h10M182 144.5h20M205 144.5h11M218 144.5h1M221 144.5h12M235 144.5h2M239 144.5h5M247 144.5h1M253 144.5h1M146 145.5h2M161 145.5h1M167 145.5h2M171 145.5h15M187 145.5h4M193 145.5h6M201 145.5h2M205 145.5h11M218 145.5h1M221 145.5h15M239 145.5h2M243 145.5h1M253 145.5h1M161 146.5h1M167 146.5h1M173 146.5h18M193 146.5h3M197 146.5h1M201 146.5h35M238 146.5h3M243 146.5h1M252 146.5h2M161 147.5h1M167 147.5h1M170 147.5h1M173 147.5h25M200 147.5h8M210 147.5h28M240 147.5h1M252 147.5h2M167 148.5h3M172 148.5h26M200 148.5h3M205 148.5h3M210 148.5h19M236 148.5h2M157 149.5h1M169 149.5h1M172 149.5h26M202 149.5h1M205 149.5h24M248 149.5h2M162 150.5h1M173 150.5h27M202 150.5h21M225 150.5h10M241 150.5h1M158 151.5h1M162 151.5h1M167 151.5h2M173 151.5h24M198 151.5h25M225 151.5h8M243 151.5h1M165 152.5h4M171 152.5h1M174 152.5h17M193 152.5h3M197 152.5h17M216 152.5h13M235 152.5h1M238 152.5h1M259 152.5h2M165 153.5h2M171 153.5h1M177 153.5h14M193 153.5h21M216 153.5h12M231 153.5h1M234 153.5h2M259 153.5h2M166 154.5h1M179 154.5h3M184 154.5h5M191 154.5h24M217 154.5h9M241 154.5h1M249 154.5h1M174 155.5h1M179 155.5h3M185 155.5h4M191 155.5h18M211 155.5h4M217 155.5h9M228 155.5h1M249 155.5h1M175 156.5h1M179 156.5h4M185 156.5h1M188 156.5h12M203 156.5h6M211 156.5h6M219 156.5h5M226 156.5h1M228 156.5h1M235 156.5h1M178 157.5h6M188 157.5h13M203 157.5h14M220 157.5h4M231 157.5h1M234 157.5h2M248 157.5h1M174 158.5h1M178 158.5h5M186 158.5h2M190 158.5h10M202 158.5h14M220 158.5h5M228 158.5h1M233 158.5h3M248 158.5h2M158 159.5h2M178 159.5h3M190 159.5h10M202 159.5h14M218 159.5h1M221 159.5h1M226 159.5h1M233 159.5h2M158 160.5h2M177 160.5h2M188 160.5h5M195 160.5h22M218 160.5h1M221 160.5h1M223 160.5h1M233 160.5h2M246 160.5h2M174 161.5h2M178 161.5h1M186 161.5h2M191 161.5h2M197 161.5h1M199 161.5h17M223 161.5h1M227 161.5h4M246 161.5h2M175 162.5h1M182 162.5h3M191 162.5h4M197 162.5h3M201 162.5h2M205 162.5h6M212 162.5h2M217 162.5h1M219 162.5h1M225 162.5h4M242 162.5h2M171 163.5h2M188 163.5h2M191 163.5h2M195 163.5h6M209 163.5h2M217 163.5h2M225 163.5h1M177 164.5h2M192 164.5h1M195 164.5h2M199 164.5h2M208 164.5h3M187 165.5h1M191 165.5h6M209 165.5h3M223 165.5h2M232 165.5h4M243 165.5h1M160 166.5h2M166 166.5h2M183 166.5h1M188 166.5h2M192 166.5h3M202 166.5h1M209 166.5h3M223 166.5h1M232 166.5h4M243 166.5h2M160 167.5h2M166 167.5h2M188 167.5h2M193 167.5h2M200 167.5h2M209 167.5h1M214 167.5h1M234 167.5h2M179 168.5h1M185 168.5h1M190 168.5h1M194 168.5h1M201 168.5h1M209 168.5h2M214 168.5h1M223 168.5h1M179 169.5h1M182 169.5h1M185 169.5h1M194 169.5h1M209 169.5h2M214 169.5h1M222 169.5h2M169 170.5h4M181 170.5h2M188 170.5h1M204 170.5h2M208 170.5h1M154 171.5h2M169 171.5h4M181 171.5h1M195 171.5h2M208 171.5h1M212 171.5h2M216 171.5h1M154 172.5h2M180 172.5h2M200 172.5h1M216 172.5h2M227 172.5h2M190 173.5h1M197 173.5h1M200 173.5h1M227 173.5h2M190 174.5h1M213 174.5h2M220 174.5h2M206 175.5h2M213 175.5h2M206 176.5h2" stroke="#c89400" stroke-width="1" fill="none"/>
</svg>
<svg class="b" style="left:0;top:0" width="1080" height="438" viewBox="0 0 1080 438"><rect x="50.9" y="35.2" width="303.8" height="156.60000000000002" fill="none" stroke="#4e4e4e" stroke-width="1.5"/></svg>
<svg class="b" style="left:0;top:0" width="1080" height="438" viewBox="0 0 1080 438"><rect x="364.2" y="19.6" width="351.8" height="197.20" fill="#2a5fc0"/><rect x="365.8" y="19.6" width="348.6" height="195.60" fill="#000"/><rect x="364.2" y="19.6" width="351.8" height="2.3" fill="#2e78ee"/><rect x="364.09999999999997" y="3.0" width="59.5" height="17.8" fill="#2e78ee"/><rect x="366.2" y="5.1" width="55.599999999999994" height="14.8" fill="#3d3e45"/><rect x="364.09999999999997" y="18.8" width="59.5" height="2.1" fill="#2e78ee"/></svg>
<span class="t tab" style="top:6.80px;color:#ffffff;font-size:9.0px;line-height:10px;left:368.80px;letter-spacing:-0.601px;">C: Summary</span>
<svg class="b" style="left:692.95px;top:7.4px" width="22" height="12" viewBox="0 0 22 12"><path d="M2.85 5.4h5.4l-2.7 3.0z" fill="#dcdcdc"/><path d="M14.1 2.8l5.5 5.4M19.6 2.8l-5.5 5.4" stroke="#d6d6d6" stroke-width="1.0" fill="none"/></svg>
<div class="b" style="left:702.8px;top:21.9px;width:11.6px;height:193.3px;background:#f0f0f0;"></div>
<div class="b" style="left:365.8px;top:203.9px;width:348.6px;height:11.3px;background:#f0f0f0;"></div>
<div class="b" style="left:703.6px;top:34.4px;width:10px;height:10.8px;background:#cdcdcd;"></div>
<div class="b" style="left:377.6px;top:204.8px;width:10.8px;height:10px;background:#cdcdcd;"></div>
<svg class="b" style="left:0;top:0" width="1080" height="438" viewBox="0 0 1080 438"><path d="M705.9 29.4l2.7-2.8 2.7 2.8M705.9 196.6l2.7 2.8 2.7-2.8M372.3 207l-2.8 2.8 2.8 2.8M695.4 207l2.8 2.8-2.8 2.8" stroke="#505050" stroke-width="1.1" fill="none"/></svg>
<svg class="b" style="left:0;top:0" width="1080" height="438" viewBox="0 0 1080 438"><rect x="719.3" y="19.6" width="350.9000000000001" height="197.20" fill="#0f8c96"/><rect x="720.4499999999999" y="19.6" width="348.6000000000001" height="196.05" fill="#000"/><rect x="719.3" y="19.6" width="350.9000000000001" height="2.3" fill="#0ccfcf"/><rect x="719.1999999999999" y="3.0" width="194.7" height="17.8" fill="#08e8e8"/><rect x="721.3" y="5.1" width="190.8" height="14.8" fill="#3d3e45"/><rect x="719.1999999999999" y="18.8" width="194.7" height="2.1" fill="#08e8e8"/></svg>
<span class="t tab" style="top:6.80px;color:#ffffff;font-size:9.0px;line-height:10px;left:723.90px;letter-spacing:-0.351px;">E: OFDM Detected Allocations Time: All Layers</span>
<svg class="b" style="left:1048.15px;top:7.4px" width="22" height="12" viewBox="0 0 22 12"><path d="M2.85 5.4h5.4l-2.7 3.0z" fill="#dcdcdc"/><path d="M14.1 2.8l5.5 5.4M19.6 2.8l-5.5 5.4" stroke="#d6d6d6" stroke-width="1.0" fill="none"/></svg>
<svg class="b" style="left:0;top:0" width="1080" height="438" viewBox="0 0 1080 438"><rect x="759.7" y="34.1" width="305.20" height="158.20" fill="#c89400"/><path d="M759.7 49.92H1064.9M759.7 65.74H1064.9M759.7 81.56H1064.9M759.7 97.38H1064.9M759.7 113.20H1064.9M759.7 129.02H1064.9M759.7 144.84H1064.9M759.7 160.66H1064.9M759.7 176.48H1064.9" stroke="#b88800" stroke-width="0.6" fill="none"/><path d="M762.40 36.90h3v3h-3zM762.40 46.76h3v3h-3zM762.40 56.61h3v3h-3zM762.40 66.47h3v3h-3zM762.40 76.33h3v3h-3zM762.40 86.18h3v3h-3zM762.40 96.04h3v3h-3zM762.40 105.89h3v3h-3zM762.40 115.75h3v3h-3zM762.40 125.61h3v3h-3zM762.40 135.46h3v3h-3zM762.40 145.32h3v3h-3zM762.40 155.18h3v3h-3zM762.40 165.03h3v3h-3zM762.40 174.89h3v3h-3zM762.40 184.74h3v3h-3zM768.95 36.90h3v3h-3zM768.95 46.76h3v3h-3zM768.95 56.61h3v3h-3zM768.95 66.47h3v3h-3zM768.95 76.33h3v3h-3zM768.95 86.18h3v3h-3zM768.95 96.04h3v3h-3zM768.95 105.89h3v3h-3zM768.95 115.75h3v3h-3zM768.95 125.61h3v3h-3zM768.95 135.46h3v3h-3zM768.95 145.32h3v3h-3zM768.95 155.18h3v3h-3zM768.95 165.03h3v3h-3zM768.95 174.89h3v3h-3zM768.95 184.74h3v3h-3zM775.50 36.90h3v3h-3zM775.50 46.76h3v3h-3zM775.50 56.61h3v3h-3zM775.50 66.47h3v3h-3zM775.50 76.33h3v3h-3zM775.50 86.18h3v3h-3zM775.50 96.04h3v3h-3zM775.50 105.89h3v3h-3zM775.50 115.75h3v3h-3zM775.50 125.61h3v3h-3zM775.50 135.46h3v3h-3zM775.50 145.32h3v3h-3zM775.50 155.18h3v3h-3zM775.50 165.03h3v3h-3zM775.50 174.89h3v3h-3zM775.50 184.74h3v3h-3zM782.05 36.90h3v3h-3zM782.05 46.76h3v3h-3zM782.05 56.61h3v3h-3zM782.05 66.47h3v3h-3zM782.05 76.33h3v3h-3zM782.05 86.18h3v3h-3zM782.05 96.04h3v3h-3zM782.05 105.89h3v3h-3zM782.05 115.75h3v3h-3zM782.05 125.61h3v3h-3zM782.05 135.46h3v3h-3zM782.05 145.32h3v3h-3zM782.05 155.18h3v3h-3zM782.05 165.03h3v3h-3zM782.05 174.89h3v3h-3zM782.05 184.74h3v3h-3zM792.92 36.90h3v3h-3zM792.92 46.76h3v3h-3zM792.92 56.61h3v3h-3zM792.92 66.47h3v3h-3zM792.92 76.33h3v3h-3zM792.92 86.18h3v3h-3zM792.92 96.04h3v3h-3zM792.92 105.89h3v3h-3zM792.92 115.75h3v3h-3zM792.92 125.61h3v3h-3zM792.92 135.46h3v3h-3zM792.92 145.32h3v3h-3zM792.92 155.18h3v3h-3zM792.92 165.03h3v3h-3zM792.92 174.89h3v3h-3zM792.92 184.74h3v3h-3zM799.47 36.90h3v3h-3zM799.47 46.76h3v3h-3zM799.47 56.61h3v3h-3zM799.47 66.47h3v3h-3zM799.47 76.33h3v3h-3zM799.47 86.18h3v3h-3zM799.47 96.04h3v3h-3zM799.47 105.89h3v3h-3zM799.47 115.75h3v3h-3zM799.47 125.61h3v3h-3zM799.47 135.46h3v3h-3zM799.47 145.32h3v3h-3zM799.47 155.18h3v3h-3zM799.47 165.03h3v3h-3zM799.47 174.89h3v3h-3zM799.47 184.74h3v3h-3zM806.02 36.90h3v3h-3zM806.02 46.76h3v3h-3zM806.02 56.61h3v3h-3zM806.02 66.47h3v3h-3zM806.02 76.33h3v3h-3zM806.02 86.18h3v3h-3zM806.02 96.04h3v3h-3zM806.02 105.89h3v3h-3zM806.02 115.75h3v3h-3zM806.02 125.61h3v3h-3zM806.02 135.46h3v3h-3zM806.02 145.32h3v3h-3zM806.02 155.18h3v3h-3zM806.02 165.03h3v3h-3zM806.02 174.89h3v3h-3zM806.02 184.74h3v3h-3zM812.57 36.90h3v3h-3zM812.57 46.76h3v3h-3zM812.57 56.61h3v3h-3zM812.57 66.47h3v3h-3zM812.57 76.33h3v3h-3zM812.57 86.18h3v3h-3zM812.57 96.04h3v3h-3zM812.57 105.89h3v3h-3zM812.57 115.75h3v3h-3zM812.57 125.61h3v3h-3zM812.57 135.46h3v3h-3zM812.57 145.32h3v3h-3zM812.57 155.18h3v3h-3zM812.57 165.03h3v3h-3zM812.57 174.89h3v3h-3zM812.57 184.74h3v3h-3zM823.44 36.90h3v3h-3zM823.44 46.76h3v3h-3zM823.44 56.61h3v3h-3zM823.44 66.47h3v3h-3zM823.44 76.33h3v3h-3zM823.44 86.18h3v3h-3zM823.44 96.04h3v3h-3zM823.44 105.89h3v3h-3zM823.44 115.75h3v3h-3zM823.44 125.61h3v3h-3zM823.44 135.46h3v3h-3zM823.44 145.32h3v3h-3zM823.44 155.18h3v3h-3zM823.44 165.03h3v3h-3zM823.44 174.89h3v3h-3zM823.44 184.74h3v3h-3zM829.99 36.90h3v3h-3zM829.99 46.76h3v3h-3zM829.99 56.61h3v3h-3zM829.99 66.47h3v3h-3zM829.99 76.33h3v3h-3zM829.99 86.18h3v3h-3zM829.99 96.04h3v3h-3zM829.99 105.89h3v3h-3zM829.99 115.75h3v3h-3zM829.99 125.61h3v3h-3zM829.99 135.46h3v3h-3zM829.99 145.32h3v3h-3zM829.99 155.18h3v3h-3zM829.99 165.03h3v3h-3zM829.99 174.89h3v3h-3zM829.99 184.74h3v3h-3zM836.54 36.90h3v3h-3zM836.54 46.76h3v3h-3zM836.54 56.61h3v3h-3zM836.54 66.47h3v3h-3zM836.54 76.33h3v3h-3zM836.54 86.18h3v3h-3zM836.54 96.04h3v3h-3zM836.54 105.89h3v3h-3zM836.54 115.75h3v3h-3zM836.54 125.61h3v3h-3zM836.54 135.46h3v3h-3zM836.54 145.32h3v3h-3zM836.54 155.18h3v3h-3zM836.54 165.03h3v3h-3zM836.54 174.89h3v3h-3zM836.54 184.74h3v3h-3zM843.09 36.90h3v3h-3zM843.09 46.76h3v3h-3zM843.09 56.61h3v3h-3zM843.09 66.47h3v3h-3zM843.09 76.33h3v3h-3zM843.09 86.18h3v3h-3zM843.09 96.04h3v3h-3zM843.09 105.89h3v3h-3zM843.09 115.75h3v3h-3zM843.09 125.61h3v3h-3zM843.09 135.46h3v3h-3zM843.09 145.32h3v3h-3zM843.09 155.18h3v3h-3zM843.09 165.03h3v3h-3zM843.09 174.89h3v3h-3zM843.09 184.74h3v3h-3zM853.96 36.90h3v3h-3zM853.96 46.76h3v3h-3zM853.96 56.61h3v3h-3zM853.96 66.47h3v3h-3zM853.96 76.33h3v3h-3zM853.96 86.18h3v3h-3zM853.96 96.04h3v3h-3zM853.96 105.89h3v3h-3zM853.96 115.75h3v3h-3zM853.96 125.61h3v3h-3zM853.96 135.46h3v3h-3zM853.96 145.32h3v3h-3zM853.96 155.18h3v3h-3zM853.96 165.03h3v3h-3zM853.96 174.89h3v3h-3zM853.96 184.74h3v3h-3zM860.51 36.90h3v3h-3zM860.51 46.76h3v3h-3zM860.51 56.61h3v3h-3zM860.51 66.47h3v3h-3zM860.51 76.33h3v3h-3zM860.51 86.18h3v3h-3zM860.51 96.04h3v3h-3zM860.51 105.89h3v3h-3zM860.51 115.75h3v3h-3zM860.51 125.61h3v3h-3zM860.51 135.46h3v3h-3zM860.51 145.32h3v3h-3zM860.51 155.18h3v3h-3zM860.51 165.03h3v3h-3zM860.51 174.89h3v3h-3zM860.51 184.74h3v3h-3zM867.06 36.90h3v3h-3zM867.06 46.76h3v3h-3zM867.06 56.61h3v3h-3zM867.06 66.47h3v3h-3zM867.06 76.33h3v3h-3zM867.06 86.18h3v3h-3zM867.06 96.04h3v3h-3zM867.06 105.89h3v3h-3zM867.06 115.75h3v3h-3zM867.06 125.61h3v3h-3zM867.06 135.46h3v3h-3zM867.06 145.32h3v3h-3zM867.06 155.18h3v3h-3zM867.06 165.03h3v3h-3zM867.06 174.89h3v3h-3zM867.06 184.74h3v3h-3zM873.61 36.90h3v3h-3zM873.61 46.76h3v3h-3zM873.61 56.61h3v3h-3zM873.61 66.47h3v3h-3zM873.61 76.33h3v3h-3zM873.61 86.18h3v3h-3zM873.61 96.04h3v3h-3zM873.61 105.89h3v3h-3zM873.61 115.75h3v3h-3zM873.61 125.61h3v3h-3zM873.61 135.46h3v3h-3zM873.61 145.32h3v3h-3zM873.61 155.18h3v3h-3zM873.61 165.03h3v3h-3zM873.61 174.89h3v3h-3zM873.61 184.74h3v3h-3zM884.48 36.90h3v3h-3zM884.48 46.76h3v3h-3zM884.48 56.61h3v3h-3zM884.48 66.47h3v3h-3zM884.48 76.33h3v3h-3zM884.48 86.18h3v3h-3zM884.48 96.04h3v3h-3zM884.48 105.89h3v3h-3zM884.48 115.75h3v3h-3zM884.48 125.61h3v3h-3zM884.48 135.46h3v3h-3zM884.48 145.32h3v3h-3zM884.48 155.18h3v3h-3zM884.48 165.03h3v3h-3zM884.48 174.89h3v3h-3zM884.48 184.74h3v3h-3zM891.03 36.90h3v3h-3zM891.03 46.76h3v3h-3zM891.03 56.61h3v3h-3zM891.03 66.47h3v3h-3zM891.03 76.33h3v3h-3zM891.03 86.18h3v3h-3zM891.03 96.04h3v3h-3zM891.03 105.89h3v3h-3zM891.03 115.75h3v3h-3zM891.03 125.61h3v3h-3zM891.03 135.46h3v3h-3zM891.03 145.32h3v3h-3zM891.03 155.18h3v3h-3zM891.03 165.03h3v3h-3zM891.03 174.89h3v3h-3zM891.03 184.74h3v3h-3zM897.58 36.90h3v3h-3zM897.58 46.76h3v3h-3zM897.58 56.61h3v3h-3zM897.58 66.47h3v3h-3zM897.58 76.33h3v3h-3zM897.58 86.18h3v3h-3zM897.58 96.04h3v3h-3zM897.58 105.89h3v3h-3zM897.58 115.75h3v3h-3zM897.58 125.61h3v3h-3zM897.58 135.46h3v3h-3zM897.58 145.32h3v3h-3zM897.58 155.18h3v3h-3zM897.58 165.03h3v3h-3zM897.58 174.89h3v3h-3zM897.58 184.74h3v3h-3zM904.13 36.90h3v3h-3zM904.13 46.76h3v3h-3zM904.13 56.61h3v3h-3zM904.13 66.47h3v3h-3zM904.13 76.33h3v3h-3zM904.13 86.18h3v3h-3zM904.13 96.04h3v3h-3zM904.13 105.89h3v3h-3zM904.13 115.75h3v3h-3zM904.13 125.61h3v3h-3zM904.13 135.46h3v3h-3zM904.13 145.32h3v3h-3zM904.13 155.18h3v3h-3zM904.13 165.03h3v3h-3zM904.13 174.89h3v3h-3zM904.13 184.74h3v3h-3zM915.00 36.90h3v3h-3zM915.00 46.76h3v3h-3zM915.00 56.61h3v3h-3zM915.00 66.47h3v3h-3zM915.00 76.33h3v3h-3zM915.00 86.18h3v3h-3zM915.00 96.04h3v3h-3zM915.00 105.89h3v3h-3zM915.00 115.75h3v3h-3zM915.00 125.61h3v3h-3zM915.00 135.46h3v3h-3zM915.00 145.32h3v3h-3zM915.00 155.18h3v3h-3zM915.00 165.03h3v3h-3zM915.00 174.89h3v3h-3zM915.00 184.74h3v3h-3zM921.55 36.90h3v3h-3zM921.55 46.76h3v3h-3zM921.55 56.61h3v3h-3zM921.55 66.47h3v3h-3zM921.55 76.33h3v3h-3zM921.55 86.18h3v3h-3zM921.55 96.04h3v3h-3zM921.55 105.89h3v3h-3zM921.55 115.75h3v3h-3zM921.55 125.61h3v3h-3zM921.55 135.46h3v3h-3zM921.55 145.32h3v3h-3zM921.55 155.18h3v3h-3zM921.55 165.03h3v3h-3zM921.55 174.89h3v3h-3zM921.55 184.74h3v3h-3zM928.10 36.90h3v3h-3zM928.10 46.76h3v3h-3zM928.10 56.61h3v3h-3zM928.10 66.47h3v3h-3zM928.10 76.33h3v3h-3zM928.10 86.18h3v3h-3zM928.10 96.04h3v3h-3zM928.10 105.89h3v3h-3zM928.10 115.75h3v3h-3zM928.10 125.61h3v3h-3zM928.10 135.46h3v3h-3zM928.10 145.32h3v3h-3zM928.10 155.18h3v3h-3zM928.10 165.03h3v3h-3zM928.10 174.89h3v3h-3zM928.10 184.74h3v3h-3zM934.65 36.90h3v3h-3zM934.65 46.76h3v3h-3zM934.65 56.61h3v3h-3zM934.65 66.47h3v3h-3zM934.65 76.33h3v3h-3zM934.65 86.18h3v3h-3zM934.65 96.04h3v3h-3zM934.65 105.89h3v3h-3zM934.65 115.75h3v3h-3zM934.65 125.61h3v3h-3zM934.65 135.46h3v3h-3zM934.65 145.32h3v3h-3zM934.65 155.18h3v3h-3zM934.65 165.03h3v3h-3zM934.65 174.89h3v3h-3zM934.65 184.74h3v3h-3zM945.52 36.90h3v3h-3zM945.52 46.76h3v3h-3zM945.52 56.61h3v3h-3zM945.52 66.47h3v3h-3zM945.52 76.33h3v3h-3zM945.52 86.18h3v3h-3zM945.52 96.04h3v3h-3zM945.52 105.89h3v3h-3zM945.52 115.75h3v3h-3zM945.52 125.61h3v3h-3zM945.52 135.46h3v3h-3zM945.52 145.32h3v3h-3zM945.52 155.18h3v3h-3zM945.52 165.03h3v3h-3zM945.52 174.89h3v3h-3zM945.52 184.74h3v3h-3zM952.07 36.90h3v3h-3zM952.07 46.76h3v3h-3zM952.07 56.61h3v3h-3zM952.07 66.47h3v3h-3zM952.07 76.33h3v3h-3zM952.07 86.18h3v3h-3zM952.07 96.04h3v3h-3zM952.07 105.89h3v3h-3zM952.07 115.75h3v3h-3zM952.07 125.61h3v3h-3zM952.07 135.46h3v3h-3zM952.07 145.32h3v3h-3zM952.07 155.18h3v3h-3zM952.07 165.03h3v3h-3zM952.07 174.89h3v3h-3zM952.07 184.74h3v3h-3zM958.62 36.90h3v3h-3zM958.62 46.76h3v3h-3zM958.62 56.61h3v3h-3zM958.62 66.47h3v3h-3zM958.62 76.33h3v3h-3zM958.62 86.18h3v3h-3zM958.62 96.04h3v3h-3zM958.62 105.89h3v3h-3zM958.62 115.75h3v3h-3zM958.62 125.61h3v3h-3zM958.62 135.46h3v3h-3zM958.62 145.32h3v3h-3zM958.62 155.18h3v3h-3zM958.62 165.03h3v3h-3zM958.62 174.89h3v3h-3zM958.62 184.74h3v3h-3zM965.17 36.90h3v3h-3zM965.17 46.76h3v3h-3zM965.17 56.61h3v3h-3zM965.17 66.47h3v3h-3zM965.17 76.33h3v3h-3zM965.17 86.18h3v3h-3zM965.17 96.04h3v3h-3zM965.17 105.89h3v3h-3zM965.17 115.75h3v3h-3zM965.17 125.61h3v3h-3zM965.17 135.46h3v3h-3zM965.17 145.32h3v3h-3zM965.17 155.18h3v3h-3zM965.17 165.03h3v3h-3zM965.17 174.89h3v3h-3zM965.17 184.74h3v3h-3zM976.04 36.90h3v3h-3zM976.04 46.76h3v3h-3zM976.04 56.61h3v3h-3zM976.04 66.47h3v3h-3zM976.04 76.33h3v3h-3zM976.04 86.18h3v3h-3zM976.04 96.04h3v3h-3zM976.04 105.89h3v3h-3zM976.04 115.75h3v3h-3zM976.04 125.61h3v3h-3zM976.04 135.46h3v3h-3zM976.04 145.32h3v3h-3zM976.04 155.18h3v3h-3zM976.04 165.03h3v3h-3zM976.04 174.89h3v3h-3zM976.04 184.74h3v3h-3zM982.59 36.90h3v3h-3zM982.59 46.76h3v3h-3zM982.59 56.61h3v3h-3zM982.59 66.47h3v3h-3zM982.59 76.33h3v3h-3zM982.59 86.18h3v3h-3zM982.59 96.04h3v3h-3zM982.59 105.89h3v3h-3zM982.59 115.75h3v3h-3zM982.59 125.61h3v3h-3zM982.59 135.46h3v3h-3zM982.59 145.32h3v3h-3zM982.59 155.18h3v3h-3zM982.59 165.03h3v3h-3zM982.59 174.89h3v3h-3zM982.59 184.74h3v3h-3zM989.14 36.90h3v3h-3zM989.14 46.76h3v3h-3zM989.14 56.61h3v3h-3zM989.14 66.47h3v3h-3zM989.14 76.33h3v3h-3zM989.14 86.18h3v3h-3zM989.14 96.04h3v3h-3zM989.14 105.89h3v3h-3zM989.14 115.75h3v3h-3zM989.14 125.61h3v3h-3zM989.14 135.46h3v3h-3zM989.14 145.32h3v3h-3zM989.14 155.18h3v3h-3zM989.14 165.03h3v3h-3zM989.14 174.89h3v3h-3zM989.14 184.74h3v3h-3zM995.69 36.90h3v3h-3zM995.69 46.76h3v3h-3zM995.69 56.61h3v3h-3zM995.69 66.47h3v3h-3zM995.69 76.33h3v3h-3zM995.69 86.18h3v3h-3zM995.69 96.04h3v3h-3zM995.69 105.89h3v3h-3zM995.69 115.75h3v3h-3zM995.69 125.61h3v3h-3zM995.69 135.46h3v3h-3zM995.69 145.32h3v3h-3zM995.69 155.18h3v3h-3zM995.69 165.03h3v3h-3zM995.69 174.89h3v3h-3zM995.69 184.74h3v3h-3zM1006.56 36.90h3v3h-3zM1006.56 46.76h3v3h-3zM1006.56 56.61h3v3h-3zM1006.56 66.47h3v3h-3zM1006.56 76.33h3v3h-3zM1006.56 86.18h3v3h-3zM1006.56 96.04h3v3h-3zM1006.56 105.89h3v3h-3zM1006.56 115.75h3v3h-3zM1006.56 125.61h3v3h-3zM1006.56 135.46h3v3h-3zM1006.56 145.32h3v3h-3zM1006.56 155.18h3v3h-3zM1006.56 165.03h3v3h-3zM1006.56 174.89h3v3h-3zM1006.56 184.74h3v3h-3zM1013.11 36.90h3v3h-3zM1013.11 46.76h3v3h-3zM1013.11 56.61h3v3h-3zM1013.11 66.47h3v3h-3zM1013.11 76.33h3v3h-3zM1013.11 86.18h3v3h-3zM1013.11 96.04h3v3h-3zM1013.11 105.89h3v3h-3zM1013.11 115.75h3v3h-3zM1013.11 125.61h3v3h-3zM1013.11 135.46h3v3h-3zM1013.11 145.32h3v3h-3zM1013.11 155.18h3v3h-3zM1013.11 165.03h3v3h-3zM1013.11 174.89h3v3h-3zM1013.11 184.74h3v3h-3zM1019.66 36.90h3v3h-3zM1019.66 46.76h3v3h-3zM1019.66 56.61h3v3h-3zM1019.66 66.47h3v3h-3zM1019.66 76.33h3v3h-3zM1019.66 86.18h3v3h-3zM1019.66 96.04h3v3h-3zM1019.66 105.89h3v3h-3zM1019.66 115.75h3v3h-3zM1019.66 125.61h3v3h-3zM1019.66 135.46h3v3h-3zM1019.66 145.32h3v3h-3zM1019.66 155.18h3v3h-3zM1019.66 165.03h3v3h-3zM1019.66 174.89h3v3h-3zM1019.66 184.74h3v3h-3zM1026.21 36.90h3v3h-3zM1026.21 46.76h3v3h-3zM1026.21 56.61h3v3h-3zM1026.21 66.47h3v3h-3zM1026.21 76.33h3v3h-3zM1026.21 86.18h3v3h-3zM1026.21 96.04h3v3h-3zM1026.21 105.89h3v3h-3zM1026.21 115.75h3v3h-3zM1026.21 125.61h3v3h-3zM1026.21 135.46h3v3h-3zM1026.21 145.32h3v3h-3zM1026.21 155.18h3v3h-3zM1026.21 165.03h3v3h-3zM1026.21 174.89h3v3h-3zM1026.21 184.74h3v3h-3zM1037.08 36.90h3v3h-3zM1037.08 46.76h3v3h-3zM1037.08 56.61h3v3h-3zM1037.08 66.47h3v3h-3zM1037.08 76.33h3v3h-3zM1037.08 86.18h3v3h-3zM1037.08 96.04h3v3h-3zM1037.08 105.89h3v3h-3zM1037.08 115.75h3v3h-3zM1037.08 125.61h3v3h-3zM1037.08 135.46h3v3h-3zM1037.08 145.32h3v3h-3zM1037.08 155.18h3v3h-3zM1037.08 165.03h3v3h-3zM1037.08 174.89h3v3h-3zM1037.08 184.74h3v3h-3zM1043.63 36.90h3v3h-3zM1043.63 46.76h3v3h-3zM1043.63 56.61h3v3h-3zM1043.63 66.47h3v3h-3zM1043.63 76.33h3v3h-3zM1043.63 86.18h3v3h-3zM1043.63 96.04h3v3h-3zM1043.63 105.89h3v3h-3zM1043.63 115.75h3v3h-3zM1043.63 125.61h3v3h-3zM1043.63 135.46h3v3h-3zM1043.63 145.32h3v3h-3zM1043.63 155.18h3v3h-3zM1043.63 165.03h3v3h-3zM1043.63 174.89h3v3h-3zM1043.63 184.74h3v3h-3zM1050.18 36.90h3v3h-3zM1050.18 46.76h3v3h-3zM1050.18 56.61h3v3h-3zM1050.18 66.47h3v3h-3zM1050.18 76.33h3v3h-3zM1050.18 86.18h3v3h-3zM1050.18 96.04h3v3h-3zM1050.18 105.89h3v3h-3zM1050.18 115.75h3v3h-3zM1050.18 125.61h3v3h-3zM1050.18 135.46h3v3h-3zM1050.18 145.32h3v3h-3zM1050.18 155.18h3v3h-3zM1050.18 165.03h3v3h-3zM1050.18 174.89h3v3h-3zM1050.18 184.74h3v3h-3zM1056.73 36.90h3v3h-3zM1056.73 46.76h3v3h-3zM1056.73 56.61h3v3h-3zM1056.73 66.47h3v3h-3zM1056.73 76.33h3v3h-3zM1056.73 86.18h3v3h-3zM1056.73 96.04h3v3h-3zM1056.73 105.89h3v3h-3zM1056.73 115.75h3v3h-3zM1056.73 125.61h3v3h-3zM1056.73 135.46h3v3h-3zM1056.73 145.32h3v3h-3zM1056.73 155.18h3v3h-3zM1056.73 165.03h3v3h-3zM1056.73 174.89h3v3h-3zM1056.73 184.74h3v3h-3z" fill="#08a5d2"/><path d="M759.70 34.1V192.3M790.22 34.1V192.3M820.74 34.1V192.3M851.26 34.1V192.3M881.78 34.1V192.3M912.30 34.1V192.3M942.82 34.1V192.3M973.34 34.1V192.3M1003.86 34.1V192.3M1034.38 34.1V192.3M1064.90 34.1V192.3" stroke="#000" stroke-width="1.2" fill="none"/></svg>
<svg class="b" style="left:0;top:0" width="1080" height="438" viewBox="0 0 1080 438"><rect x="10" y="237.1" width="351" height="197.30" fill="#1f8c0a"/><rect x="11.15" y="237.1" width="348.7" height="196.15" fill="#000"/><rect x="10" y="237.1" width="351" height="2.3" fill="#34e010"/><rect x="9.9" y="220.9" width="76.7" height="17.8" fill="#34e010"/><rect x="12.0" y="223.0" width="72.8" height="14.8" fill="#3d3e45"/><rect x="9.9" y="236.70000000000002" width="76.7" height="2.1" fill="#34e010"/></svg>
<span class="t tab" style="top:224.90px;color:#ffffff;font-size:9.0px;line-height:10px;left:14.60px;letter-spacing:-0.575px;">B: Ch1 Spectrum</span>
<svg class="b" style="left:338.15px;top:224.4px" width="22" height="12" viewBox="0 0 22 12"><path d="M2.85 5.4h5.4l-2.7 3.0z" fill="#dcdcdc"/><path d="M14.1 2.8l5.5 5.4M19.6 2.8l-5.5 5.4" stroke="#d6d6d6" stroke-width="1.0" fill="none"/></svg>
<svg class="b" style="left:0;top:0" width="1080" height="438" viewBox="0 0 1080 438"><path d="M81.37 252.6V409.4M51.0 268.28H354.7M111.74 252.6V409.4M51.0 283.96H354.7M142.11 252.6V409.4M51.0 299.64H354.7M172.48 252.6V409.4M51.0 315.32H354.7M202.85 252.6V409.4M51.0 331.00H354.7M233.22 252.6V409.4M51.0 346.68H354.7M263.59 252.6V409.4M51.0 362.36H354.7M293.96 252.6V409.4M51.0 378.04H354.7M324.33 252.6V409.4M51.0 393.72H354.7" stroke="#363636" stroke-width="0.9" fill="none"/><rect x="51.0" y="252.6" width="303.7" height="156.79999999999998" fill="none" stroke="#4e4e4e" stroke-width="1.5"/></svg>
<svg class="b" style="left:0;top:0" width="1080" height="438" viewBox="0 0 1080 438"><path d="M50.6 325.5 51.1 325.5 51.6 324.7 52.1 326.4 52.6 324.5 53.1 324.3 53.6 326.0 54.1 324.2 54.6 324.7 55.1 325.5 55.6 325.7 56.1 326.1 56.6 327.0 57.1 326.2 57.6 325.0 58.1 325.3 58.6 326.9 59.1 324.8 59.6 326.9 60.1 326.0 60.6 324.4 61.1 326.3 61.6 322.4 62.1 325.8 62.6 326.2 63.1 324.5 63.6 325.0 64.1 325.1 64.6 325.3 65.1 324.5 65.6 324.9 66.1 325.0 66.6 325.8 67.1 325.2 67.6 325.6 68.1 324.7 68.6 326.5 69.1 326.3 69.6 326.9 70.1 325.4 70.6 326.9 71.1 324.9 71.6 325.0 72.1 324.4 72.6 326.6 73.1 326.8 73.6 325.0 74.1 324.7 74.6 324.6 75.1 326.9 75.6 325.8 76.1 324.3 76.6 325.1 77.1 326.2 77.6 324.4 78.1 326.7 78.6 326.4 79.1 326.1 79.6 325.4 80.1 325.8 80.6 325.8 81.1 326.0 81.6 326.2 82.1 325.8 82.6 324.4 83.1 325.9 83.6 326.2 84.1 326.8 84.6 325.0 85.1 324.7 85.6 325.4 86.1 326.1 86.6 326.5 87.1 325.3 87.6 324.6 88.1 326.6 88.6 325.0 89.1 325.0 89.6 326.0 90.1 326.5 90.6 322.2 91.1 326.2 91.6 325.6 92.1 324.3 92.6 322.8 93.1 326.0 93.6 326.9 94.1 325.5 94.6 325.5 95.1 325.0 95.6 325.7 96.1 325.3 96.6 324.4 97.1 324.6 97.6 326.7 98.1 326.7 98.6 325.5 99.1 326.2 99.6 326.2 100.1 326.9 100.6 326.4 101.1 326.6 101.6 325.4 102.1 323.4 102.6 326.4 103.1 326.4 103.6 325.6 104.1 326.1 104.6 326.9 105.1 325.7 105.6 326.0 106.1 325.8 106.6 326.6 107.1 326.6 107.6 325.8 108.1 325.6 108.6 326.9 109.1 326.4 109.6 324.6 110.1 326.9 110.6 325.5 111.1 326.5 111.6 325.1 112.1 326.8 112.6 324.3 113.1 326.1 113.6 325.9 114.1 324.5 114.6 324.8 115.1 325.3 115.6 324.6 116.1 326.0 116.6 325.9 117.1 326.3 117.6 325.1 118.1 324.8 118.6 324.6 119.1 324.9 119.6 325.4 120.1 325.3 120.6 324.8 121.1 326.9 121.6 326.3 122.1 324.7 122.6 324.3 123.1 315.6 123.6 306.9 124.1 298.2 124.6 289.5 125.1 279.2 125.6 278.4 126.1 280.2 126.6 278.4 127.1 279.9 127.6 280.3 128.1 280.4 128.6 280.2 129.1 279.2 129.6 279.9 130.1 280.0 130.6 279.9 131.1 279.9 131.6 278.9 132.1 279.7 132.6 279.9 133.1 278.5 133.6 279.6 134.1 279.7 134.6 279.7 135.1 278.3 135.6 278.2 136.1 279.4 136.6 280.6 137.1 279.8 137.6 278.5 138.1 279.5 138.6 279.7 139.1 278.7 139.6 279.1 140.1 280.2 140.6 279.9 141.1 278.6 141.6 279.7 142.1 279.2 142.6 280.3 143.1 279.0 143.6 279.2 144.1 279.3 144.6 279.8 145.1 278.6 145.6 280.1 146.1 280.1 146.6 280.6 147.1 279.1 147.6 279.0 148.1 279.3 148.6 280.4 149.1 277.8 149.6 280.0 150.1 278.6 150.6 279.9 151.1 278.9 151.6 279.2 152.1 280.1 152.6 280.0 153.1 280.7 153.6 279.4 154.1 279.3 154.6 279.8 155.1 278.8 155.6 278.5 156.1 280.1 156.6 278.8 157.1 279.6 157.6 279.7 158.1 280.7 158.6 279.1 159.1 279.3 159.6 278.8 160.1 279.9 160.6 278.5 161.1 279.0 161.6 280.7 162.1 279.4 162.6 279.7 163.1 279.1 163.6 279.3 164.1 280.7 164.6 279.0 165.1 278.9 165.6 279.1 166.1 278.9 166.6 280.1 167.1 278.6 167.6 280.4 168.1 278.7 168.6 279.6 169.1 279.2 169.6 280.8 170.1 279.2 170.6 279.6 171.1 280.2 171.6 278.7 172.1 280.4 172.6 278.6 173.1 280.6 173.6 278.7 174.1 279.0 174.6 278.7 175.1 279.8 175.6 278.5 176.1 279.1 176.6 279.5 177.1 279.8 177.6 279.2 178.1 280.7 178.6 280.1 179.1 280.4 179.6 280.6 180.1 277.6 180.6 280.2 181.1 279.6 181.6 279.0 182.1 280.6 182.6 280.3 183.1 278.6 183.6 278.4 184.1 280.5 184.6 276.7 185.1 280.7 185.6 280.6 186.1 278.8 186.6 278.9 187.1 279.2 187.6 280.1 188.1 279.1 188.6 280.0 189.1 279.8 189.6 279.1 190.1 279.7 190.6 279.0 191.1 279.0 191.6 279.6 192.1 279.6 192.6 280.0 193.1 280.0 193.6 278.8 194.1 280.3 194.6 279.8 195.1 279.8 195.6 279.6 196.1 278.6 196.6 279.0 197.1 279.7 197.6 278.8 198.1 280.3 198.6 279.5 199.1 279.5 199.6 278.7 200.1 278.5 200.6 279.0 201.1 279.3 201.6 279.4 202.1 280.5 202.6 280.4 203.1 278.8 203.6 279.5 204.1 280.5 204.6 279.3 205.1 279.3 205.6 278.8 206.1 279.6 206.6 279.2 207.1 278.5 207.6 279.7 208.1 280.0 208.6 279.4 209.1 279.2 209.6 280.3 210.1 278.9 210.6 279.0 211.1 278.5 211.6 278.8 212.1 279.0 212.6 279.8 213.1 279.3 213.6 279.6 214.1 278.5 214.6 280.0 215.1 279.3 215.6 279.9 216.1 280.5 216.6 279.1 217.1 278.9 217.6 279.0 218.1 279.7 218.6 280.5 219.1 280.7 219.6 279.8 220.1 279.0 220.6 278.7 221.1 278.7 221.6 280.5 222.1 280.3 222.6 279.2 223.1 279.8 223.6 280.3 224.1 277.5 224.6 280.1 225.1 279.2 225.6 280.8 226.1 279.3 226.6 279.3 227.1 280.1 227.6 278.7 228.1 277.8 228.6 278.9 229.1 278.6 229.6 279.6 230.1 279.4 230.6 279.9 231.1 279.5 231.6 278.8 232.1 279.1 232.6 278.4 233.1 279.4 233.6 278.6 234.1 279.2 234.6 280.0 235.1 279.1 235.6 280.2 236.1 278.8 236.6 278.4 237.1 280.7 237.6 278.7 238.1 279.4 238.6 280.7 239.1 278.8 239.6 279.9 240.1 279.8 240.6 280.0 241.1 279.8 241.6 279.8 242.1 280.8 242.6 279.4 243.1 279.0 243.6 280.3 244.1 279.0 244.6 278.9 245.1 280.3 245.6 280.2 246.1 279.3 246.6 280.4 247.1 279.9 247.6 279.9 248.1 278.4 248.6 279.8 249.1 279.5 249.6 279.3 250.1 279.3 250.6 279.4 251.1 280.7 251.6 279.1 252.1 279.5 252.6 279.5 253.1 280.7 253.6 279.4 254.1 279.2 254.6 278.6 255.1 280.1 255.6 278.5 256.1 279.2 256.6 280.8 257.1 280.8 257.6 278.9 258.1 279.3 258.6 279.9 259.1 280.3 259.6 279.5 260.1 280.3 260.6 278.7 261.1 279.0 261.6 279.7 262.1 278.8 262.6 280.5 263.1 280.2 263.6 278.7 264.1 278.5 264.6 280.6 265.1 280.7 265.6 279.1 266.1 279.5 266.6 280.4 267.1 278.9 267.6 279.0 268.1 278.4 268.6 279.3 269.1 279.6 269.6 279.0 270.1 279.1 270.6 279.2 271.1 278.5 271.6 280.6 272.1 278.2 272.6 280.6 273.1 279.3 273.6 280.2 274.1 279.7 274.6 279.7 275.1 280.4 275.6 279.4 276.1 280.1 276.6 278.8 277.1 279.2 277.6 280.4 278.1 279.2 278.6 279.8 279.1 280.1 279.6 280.6 280.1 278.6 280.6 279.7 281.1 280.3 281.6 293.0 282.1 301.7 282.6 310.3 283.1 319.0 283.6 326.6 284.1 323.3 284.6 325.0 285.1 325.6 285.6 325.0 286.1 324.6 286.6 325.9 287.1 325.7 287.6 326.4 288.1 326.8 288.6 324.9 289.1 326.2 289.6 325.8 290.1 326.9 290.6 326.0 291.1 324.5 291.6 327.0 292.1 324.4 292.6 324.3 293.1 326.1 293.6 325.7 294.1 324.7 294.6 325.6 295.1 325.4 295.6 325.6 296.1 325.8 296.6 325.1 297.1 326.9 297.6 326.6 298.1 325.6 298.6 325.9 299.1 324.4 299.6 324.3 300.1 326.3 300.6 326.1 301.1 326.3 301.6 324.4 302.1 326.5 302.6 323.1 303.1 325.8 303.6 326.1 304.1 326.7 304.6 324.9 305.1 325.1 305.6 324.9 306.1 326.7 306.6 325.0 307.1 326.1 307.6 324.4 308.1 324.8 308.6 325.2 309.1 327.0 309.6 326.4 310.1 326.4 310.6 325.9 311.1 325.0 311.6 324.4 312.1 324.8 312.6 326.8 313.1 324.6 313.6 324.7 314.1 326.7 314.6 325.5 315.1 325.0 315.6 324.7 316.1 325.1 316.6 325.7 317.1 326.3 317.6 324.4 318.1 325.1 318.6 325.6 319.1 325.8 319.6 326.9 320.1 326.6 320.6 326.8 321.1 326.3 321.6 324.7 322.1 323.9 322.6 325.6 323.1 323.6 323.6 324.9 324.1 325.5 324.6 325.2 325.1 325.4 325.6 325.1 326.1 326.8 326.6 324.7 327.1 325.0 327.6 324.9 328.1 326.9 328.6 326.1 329.1 325.6 329.6 323.8 330.1 325.8 330.6 324.5 331.1 326.0 331.6 325.4 332.1 324.9 332.6 324.9 333.1 325.4 333.6 325.6 334.1 326.6 334.6 324.8 335.1 326.4 335.6 326.1 336.1 326.5 336.6 326.5 337.1 325.3 337.6 326.4 338.1 326.8 338.6 326.1 339.1 326.6 339.6 326.1 340.1 325.9 340.6 324.4 341.1 326.4 341.6 326.8 342.1 325.3 342.6 324.7 343.1 326.0 343.6 325.6 344.1 324.7 344.6 326.8 345.1 326.8 345.6 325.9 346.1 325.1 346.6 323.3 347.1 325.5 347.6 324.8 348.1 324.5 348.6 325.7 349.1 325.4 349.6 325.5 350.1 325.4 350.6 325.8 351.1 326.7 351.6 327.0 352.1 325.5 352.6 325.0 353.1 325.1 353.6 326.2 354.1 324.5 L354.1 408.9 353.6 393.2 353.1 397.9 352.6 400.5 352.1 395.5 351.6 389.6 351.1 395.3 350.6 408.9 350.1 401.9 349.6 388.8 349.1 390.2 348.6 397.7 348.1 391.9 347.6 390.3 347.1 390.4 346.6 395.2 346.1 394.9 345.6 402.4 345.1 408.9 344.6 408.9 344.1 399.1 343.6 390.7 343.1 399.4 342.6 390.1 342.1 387.7 341.6 394.3 341.1 395.9 340.6 402.1 340.1 400.5 339.6 408.9 339.1 389.6 338.6 408.9 338.1 388.2 337.6 408.9 337.1 391.7 336.6 390.3 336.1 389.4 335.6 399.9 335.1 408.9 334.6 405.5 334.1 391.7 333.6 390.9 333.1 408.9 332.6 394.5 332.1 403.5 331.6 403.6 331.1 390.8 330.6 394.1 330.1 393.7 329.6 390.6 329.1 394.7 328.6 395.7 328.1 388.5 327.6 389.2 327.1 400.4 326.6 408.9 326.1 408.9 325.6 390.2 325.1 393.7 324.6 396.2 324.1 391.3 323.6 392.1 323.1 387.9 322.6 393.8 322.1 403.6 321.6 400.8 321.1 388.0 320.6 387.7 320.1 389.6 319.6 396.7 319.1 403.2 318.6 391.5 318.1 408.9 317.6 388.3 317.1 408.9 316.6 395.9 316.1 388.8 315.6 388.0 315.1 388.2 314.6 388.8 314.1 408.9 313.6 398.8 313.1 408.9 312.6 408.9 312.1 408.9 311.6 389.0 311.1 392.3 310.6 394.0 310.1 390.9 309.6 391.6 309.1 389.0 308.6 408.9 308.1 408.9 307.6 390.3 307.1 395.3 306.6 400.5 306.1 390.1 305.6 390.4 305.1 398.1 304.6 402.8 304.1 389.1 303.6 390.2 303.1 391.6 302.6 390.5 302.1 391.6 301.6 408.9 301.1 387.5 300.6 396.2 300.1 405.2 299.6 407.8 299.1 408.9 298.6 408.9 298.1 399.1 297.6 387.7 297.1 408.9 296.6 408.9 296.1 391.1 295.6 408.9 295.1 388.3 294.6 399.7 294.1 391.9 293.6 395.0 293.1 402.9 292.6 408.9 292.1 388.2 291.6 408.1 291.1 388.8 290.6 408.9 290.1 408.9 289.6 390.1 289.1 394.5 288.6 392.1 288.1 403.0 287.6 388.1 287.1 408.9 286.6 400.7 286.1 406.8 285.6 408.2 285.1 390.9 284.6 388.9 284.1 390.4 283.6 390.6 283.1 390.9 282.6 392.0 282.1 408.9 281.6 388.8 281.1 354.0 280.6 345.1 280.1 379.6 279.6 348.3 279.1 350.2 278.6 344.4 278.1 345.7 277.6 349.7 277.1 348.8 276.6 345.5 276.1 353.8 275.6 351.3 275.1 357.4 274.6 345.5 274.1 344.8 273.6 344.8 273.1 347.7 272.6 353.9 272.1 347.5 271.6 344.1 271.1 344.3 270.6 355.1 270.1 344.6 269.6 347.6 269.1 363.2 268.6 350.1 268.1 365.1 267.6 365.3 267.1 347.0 266.6 348.9 266.1 347.7 265.6 345.9 265.1 348.5 264.6 348.4 264.1 344.5 263.6 366.0 263.1 345.1 262.6 358.8 262.1 348.8 261.6 356.4 261.1 344.4 260.6 348.7 260.1 348.6 259.6 349.0 259.1 375.0 258.6 345.9 258.1 344.6 257.6 345.5 257.1 348.0 256.6 355.5 256.1 350.0 255.6 348.1 255.1 346.7 254.6 344.6 254.1 356.3 253.6 358.7 253.1 351.7 252.6 347.5 252.1 347.2 251.6 346.2 251.1 351.9 250.6 347.4 250.1 347.4 249.6 378.2 249.1 344.8 248.6 345.3 248.1 346.5 247.6 352.5 247.1 344.5 246.6 345.3 246.1 344.2 245.6 359.3 245.1 345.8 244.6 350.7 244.1 347.9 243.6 404.1 243.1 350.8 242.6 344.9 242.1 346.4 241.6 361.4 241.1 344.2 240.6 347.2 240.1 355.8 239.6 356.6 239.1 347.1 238.6 345.3 238.1 345.3 237.6 347.7 237.1 357.8 236.6 347.4 236.1 345.0 235.6 352.8 235.1 346.5 234.6 346.9 234.1 345.7 233.6 347.3 233.1 355.4 232.6 354.8 232.1 344.1 231.6 344.5 231.1 352.4 230.6 362.2 230.1 367.4 229.6 345.5 229.1 346.4 228.6 347.0 228.1 345.0 227.6 345.9 227.1 354.5 226.6 353.4 226.1 354.5 225.6 366.5 225.1 359.1 224.6 350.5 224.1 362.4 223.6 347.1 223.1 352.0 222.6 353.3 222.1 352.2 221.6 344.4 221.1 353.6 220.6 344.5 220.1 346.6 219.6 346.2 219.1 345.1 218.6 352.2 218.1 366.5 217.6 350.8 217.1 365.7 216.6 368.5 216.1 370.6 215.6 347.5 215.1 362.6 214.6 348.1 214.1 358.5 213.6 348.1 213.1 344.4 212.6 349.2 212.1 346.7 211.6 348.2 211.1 346.6 210.6 344.6 210.1 351.1 209.6 346.3 209.1 366.1 208.6 357.1 208.1 345.5 207.6 352.0 207.1 364.8 206.6 365.4 206.1 347.2 205.6 346.9 205.1 352.2 204.6 344.1 204.1 347.1 203.6 347.9 203.1 345.2 202.6 353.9 202.1 358.1 201.6 344.4 201.1 369.8 200.6 345.8 200.1 353.4 199.6 346.3 199.1 344.3 198.6 353.3 198.1 347.4 197.6 345.1 197.1 349.8 196.6 361.3 196.1 349.5 195.6 347.8 195.1 345.3 194.6 344.2 194.1 345.7 193.6 345.7 193.1 363.7 192.6 348.7 192.1 349.3 191.6 353.0 191.1 349.2 190.6 344.6 190.1 344.3 189.6 344.6 189.1 346.3 188.6 347.0 188.1 345.4 187.6 347.8 187.1 357.2 186.6 344.3 186.1 379.0 185.6 355.8 185.1 345.5 184.6 346.4 184.1 347.3 183.6 346.3 183.1 344.9 182.6 352.9 182.1 351.1 181.6 347.3 181.1 344.3 180.6 360.6 180.1 359.0 179.6 348.8 179.1 347.4 178.6 353.1 178.1 348.1 177.6 344.3 177.1 348.8 176.6 348.1 176.1 352.7 175.6 372.2 175.1 345.3 174.6 346.2 174.1 375.5 173.6 349.1 173.1 348.0 172.6 349.6 172.1 362.8 171.6 372.1 171.1 349.2 170.6 355.3 170.1 350.8 169.6 351.0 169.1 344.1 168.6 353.5 168.1 344.5 167.6 344.6 167.1 352.0 166.6 355.4 166.1 346.6 165.6 347.2 165.1 346.2 164.6 377.8 164.1 367.2 163.6 344.7 163.1 346.4 162.6 345.1 162.1 344.6 161.6 356.7 161.1 344.7 160.6 356.2 160.1 346.0 159.6 346.0 159.1 352.1 158.6 382.8 158.1 347.2 157.6 348.3 157.1 358.2 156.6 346.4 156.1 345.6 155.6 345.3 155.1 348.0 154.6 344.8 154.1 345.5 153.6 345.0 153.1 348.8 152.6 354.7 152.1 360.0 151.6 351.3 151.1 348.8 150.6 352.9 150.1 352.7 149.6 344.4 149.1 349.1 148.6 345.3 148.1 349.4 147.6 347.0 147.1 347.3 146.6 359.9 146.1 344.8 145.6 346.2 145.1 351.1 144.6 351.5 144.1 357.5 143.6 352.9 143.1 347.0 142.6 353.5 142.1 355.9 141.6 347.0 141.1 344.5 140.6 346.1 140.1 345.9 139.6 349.4 139.1 354.0 138.6 363.8 138.1 349.7 137.6 344.9 137.1 350.4 136.6 348.1 136.1 367.5 135.6 362.8 135.1 353.1 134.6 352.2 134.1 347.0 133.6 344.4 133.1 345.1 132.6 344.5 132.1 366.2 131.6 344.7 131.1 345.9 130.6 353.3 130.1 349.0 129.6 362.8 129.1 344.1 128.6 347.4 128.1 358.7 127.6 359.7 127.1 349.9 126.6 354.5 126.1 345.4 125.6 356.1 125.1 348.7 124.6 402.0 124.1 388.1 123.6 408.9 123.1 389.5 122.6 394.7 122.1 388.6 121.6 399.1 121.1 394.5 120.6 408.9 120.1 387.7 119.6 388.8 119.1 405.3 118.6 400.5 118.1 408.9 117.6 408.9 117.1 408.9 116.6 390.1 116.1 406.6 115.6 397.5 115.1 395.0 114.6 393.2 114.1 390.4 113.6 400.6 113.1 391.9 112.6 390.1 112.1 402.6 111.6 397.1 111.1 394.0 110.6 393.2 110.1 390.6 109.6 392.8 109.1 394.3 108.6 392.6 108.1 387.8 107.6 395.2 107.1 394.9 106.6 389.8 106.1 392.3 105.6 406.1 105.1 400.6 104.6 390.0 104.1 394.3 103.6 405.8 103.1 389.1 102.6 391.6 102.1 388.2 101.6 402.1 101.1 388.4 100.6 408.9 100.1 395.2 99.6 408.9 99.1 397.8 98.6 389.8 98.1 408.9 97.6 395.9 97.1 397.3 96.6 400.3 96.1 408.9 95.6 401.6 95.1 399.5 94.6 389.5 94.1 387.6 93.6 389.7 93.1 404.0 92.6 393.4 92.1 390.2 91.6 393.6 91.1 391.2 90.6 387.9 90.1 393.5 89.6 391.3 89.1 392.8 88.6 393.5 88.1 408.9 87.6 405.6 87.1 391.3 86.6 408.7 86.1 393.1 85.6 391.5 85.1 398.3 84.6 389.8 84.1 387.6 83.6 397.0 83.1 390.1 82.6 387.8 82.1 405.7 81.6 400.8 81.1 408.7 80.6 388.3 80.1 392.3 79.6 407.4 79.1 408.0 78.6 391.8 78.1 399.7 77.6 400.9 77.1 408.9 76.6 394.1 76.1 399.6 75.6 387.9 75.1 399.3 74.6 408.9 74.1 396.0 73.6 388.1 73.1 387.7 72.6 390.8 72.1 395.7 71.6 400.2 71.1 396.6 70.6 399.7 70.1 387.9 69.6 396.8 69.1 389.7 68.6 389.6 68.1 408.9 67.6 407.6 67.1 408.9 66.6 396.7 66.1 388.4 65.6 391.5 65.1 389.9 64.6 397.8 64.1 389.9 63.6 403.8 63.1 389.9 62.6 397.8 62.1 389.6 61.6 389.5 61.1 390.3 60.6 408.9 60.1 390.6 59.6 388.3 59.1 393.8 58.6 387.5 58.1 392.4 57.6 402.0 57.1 390.1 56.6 405.8 56.1 390.8 55.6 394.4 55.1 406.0 54.6 387.8 54.1 388.1 53.6 389.2 53.1 408.9 52.6 399.3 52.1 391.1 51.6 397.4 51.1 396.4 50.6 408.9z" fill="#40ff00" stroke="#40ff00" stroke-width="0.4"/></svg>
<svg class="b" style="left:0;top:0" width="1080" height="438" viewBox="0 0 1080 438"><rect x="364.2" y="237.1" width="351.8" height="197.30" fill="#a00c46"/><rect x="365.8" y="237.1" width="348.6" height="195.70" fill="#000"/><rect x="364.2" y="237.1" width="351.8" height="2.3" fill="#ec0f5a"/><rect x="364.09999999999997" y="220.9" width="162.5" height="17.8" fill="#ec0f5a"/><rect x="366.2" y="223.0" width="158.60000000000002" height="14.8" fill="#3d3e45"/><rect x="364.09999999999997" y="236.70000000000002" width="162.5" height="2.1" fill="#ec0f5a"/></svg>
<span class="t tab" style="top:224.90px;color:#ffffff;font-size:9.0px;line-height:10px;left:368.80px;letter-spacing:-0.461px;">D: OFDM Err Vect Spectrum: All Layers</span>
<svg class="b" style="left:692.95px;top:224.4px" width="22" height="12" viewBox="0 0 22 12"><path d="M2.85 5.4h5.4l-2.7 3.0z" fill="#dcdcdc"/><path d="M14.1 2.8l5.5 5.4M19.6 2.8l-5.5 5.4" stroke="#d6d6d6" stroke-width="1.0" fill="none"/></svg>
<svg class="b" style="left:0;top:0" width="1080" height="438" viewBox="0 0 1080 438"><path d="M436.29 252.6V409.4M405.9 268.28H709.8M466.68 252.6V409.4M405.9 283.96H709.8M497.07 252.6V409.4M405.9 299.64H709.8M527.46 252.6V409.4M405.9 315.32H709.8M557.85 252.6V409.4M405.9 331.00H709.8M588.24 252.6V409.4M405.9 346.68H709.8M618.63 252.6V409.4M405.9 362.36H709.8M649.02 252.6V409.4M405.9 378.04H709.8M679.41 252.6V409.4M405.9 393.72H709.8" stroke="#363636" stroke-width="0.9" fill="none"/><rect x="405.9" y="252.6" width="303.9" height="156.79999999999998" fill="none" stroke="#4e4e4e" stroke-width="1.5"/></svg>
<svg class="b" style="left:0;top:0" width="1080" height="438" viewBox="0 0 1080 438"><path d="M407.0 253.6V260.0M406.4 253.6V269.6M408.6 253.6V272.0M412.0 253.6V273.0M409.6 253.6V279.0M412.0 253.6V292.0M413.4 253.6V302.6M410.6 253.6V308.4M418.0 253.6V253.6M430.4 253.6V258.4M434.6 253.6V256.5M437.4 253.6V255.5M441.6 253.6V257.0M436.0 253.6V268.0M428.0 253.6V295.0M431.4 253.6V301.0M428.0 253.6V323.4M449.6 253.6V305.8M457.6 253.6V284.0M469.8 253.6V260.0M474.0 253.6V257.0M476.0 253.6V261.0M476.0 253.6V266.0M467.8 253.6V279.0M467.0 253.6V285.0M476.0 253.6V285.0M480.0 253.6V276.4M469.8 253.6V306.8M471.0 253.6V306.4M483.8 253.6V259.4M489.0 253.6V266.8M488.6 253.6V272.0M482.6 253.6V298.4M484.0 253.6V306.8M475.5 253.6V375.6M493.4 253.6V314.0M496.0 253.6V287.0M496.6 253.6V290.4M499.8 253.6V256.0M501.8 253.6V300.4M506.6 253.6V254.0M508.8 253.6V264.0M513.6 253.6V281.8M511.4 253.6V287.6M513.3 253.6V353.0M517.8 253.6V260.2M519.2 253.6V287.6M524.4 253.6V269.6M527.3 253.6V273.8M528.2 253.6V265.8M547.4 253.6V270.0M559.6 253.6V276.0M564.4 253.6V269.6M568.2 253.6V279.2M563.4 253.6V319.0M574.0 253.6V260.4M578.2 253.6V288.2M588.4 253.6V273.8M592.0 253.6V276.4M595.0 253.6V307.0M597.4 253.6V259.4M602.5 253.6V284.4M607.3 253.6V277.0M614.3 253.6V258.9M619.0 253.6V267.4M626.2 253.6V266.4M638.0 253.6V278.3M645.4 253.6V270.3M665.6 253.6V267.4M669.8 253.6V263.2M671.7 253.6V259.4M674.6 253.6V256.8M674.6 253.6V280.2M678.0 253.6V269.3M681.6 253.6V261.6M683.2 253.6V275.4M680.6 253.6V283.4M685.4 253.6V255.9M688.3 253.6V290.8M691.2 253.6V266.4M694.4 253.6V271.2M694.7 253.6V315.4M698.2 253.6V279.2M698.6 253.6V294.6M705.6 253.6V288.2M705.0 253.6V310.0M706.6 253.6V273.2M708.2 253.6V271.6" stroke="#d01052" stroke-width="1" fill="none"/><path d="M405.09999999999997 252.1H710.0999999999999" stroke="#fff4dc" stroke-width="2.1" fill="none"/><path d="M405.4 258.4h3.2v3.2h-3.2zM404.8 268.0h3.2v3.2h-3.2zM407.0 270.4h3.2v3.2h-3.2zM410.4 271.4h3.2v3.2h-3.2zM408.0 277.4h3.2v3.2h-3.2zM410.4 290.4h3.2v3.2h-3.2zM411.8 301.0h3.2v3.2h-3.2zM409.0 306.8h3.2v3.2h-3.2zM416.4 252.0h3.2v3.2h-3.2zM428.8 256.8h3.2v3.2h-3.2zM433.0 254.9h3.2v3.2h-3.2zM435.8 253.9h3.2v3.2h-3.2zM440.0 255.4h3.2v3.2h-3.2zM434.4 266.4h3.2v3.2h-3.2zM426.4 293.4h3.2v3.2h-3.2zM429.8 299.4h3.2v3.2h-3.2zM426.4 321.8h3.2v3.2h-3.2zM448.0 304.2h3.2v3.2h-3.2zM456.0 282.4h3.2v3.2h-3.2zM468.2 258.4h3.2v3.2h-3.2zM472.4 255.4h3.2v3.2h-3.2zM474.4 259.4h3.2v3.2h-3.2zM474.4 264.4h3.2v3.2h-3.2zM466.2 277.4h3.2v3.2h-3.2zM465.4 283.4h3.2v3.2h-3.2zM474.4 283.4h3.2v3.2h-3.2zM478.4 274.8h3.2v3.2h-3.2zM468.2 305.2h3.2v3.2h-3.2zM469.4 304.8h3.2v3.2h-3.2zM482.2 257.8h3.2v3.2h-3.2zM487.4 265.2h3.2v3.2h-3.2zM487.0 270.4h3.2v3.2h-3.2zM481.0 296.8h3.2v3.2h-3.2zM482.4 305.2h3.2v3.2h-3.2zM473.9 374.0h3.2v3.2h-3.2zM491.8 312.4h3.2v3.2h-3.2zM494.4 285.4h3.2v3.2h-3.2zM495.0 288.8h3.2v3.2h-3.2zM498.2 254.4h3.2v3.2h-3.2zM500.2 298.8h3.2v3.2h-3.2zM505.0 252.4h3.2v3.2h-3.2zM507.2 262.4h3.2v3.2h-3.2zM512.0 280.2h3.2v3.2h-3.2zM509.8 286.0h3.2v3.2h-3.2zM511.7 351.4h3.2v3.2h-3.2zM516.2 258.6h3.2v3.2h-3.2zM517.6 286.0h3.2v3.2h-3.2zM522.8 268.0h3.2v3.2h-3.2zM525.7 272.2h3.2v3.2h-3.2zM526.6 264.2h3.2v3.2h-3.2zM545.8 268.4h3.2v3.2h-3.2zM558.0 274.4h3.2v3.2h-3.2zM562.8 268.0h3.2v3.2h-3.2zM566.6 277.6h3.2v3.2h-3.2zM561.8 317.4h3.2v3.2h-3.2zM572.4 258.8h3.2v3.2h-3.2zM576.6 286.6h3.2v3.2h-3.2zM586.8 272.2h3.2v3.2h-3.2zM590.4 274.8h3.2v3.2h-3.2zM593.4 305.4h3.2v3.2h-3.2zM595.8 257.8h3.2v3.2h-3.2zM600.9 282.8h3.2v3.2h-3.2zM605.7 275.4h3.2v3.2h-3.2zM612.7 257.3h3.2v3.2h-3.2zM617.4 265.8h3.2v3.2h-3.2zM624.6 264.8h3.2v3.2h-3.2zM636.4 276.7h3.2v3.2h-3.2zM643.8 268.7h3.2v3.2h-3.2zM664.0 265.8h3.2v3.2h-3.2zM668.2 261.6h3.2v3.2h-3.2zM670.1 257.8h3.2v3.2h-3.2zM673.0 255.2h3.2v3.2h-3.2zM673.0 278.6h3.2v3.2h-3.2zM676.4 267.7h3.2v3.2h-3.2zM680.0 260.0h3.2v3.2h-3.2zM681.6 273.8h3.2v3.2h-3.2zM679.0 281.8h3.2v3.2h-3.2zM683.8 254.3h3.2v3.2h-3.2zM686.7 289.2h3.2v3.2h-3.2zM689.6 264.8h3.2v3.2h-3.2zM692.8 269.6h3.2v3.2h-3.2zM693.1 313.8h3.2v3.2h-3.2zM696.6 277.6h3.2v3.2h-3.2zM697.0 293.0h3.2v3.2h-3.2zM704.0 286.6h3.2v3.2h-3.2zM703.4 308.4h3.2v3.2h-3.2zM705.0 271.6h3.2v3.2h-3.2zM706.6 270.0h3.2v3.2h-3.2z" fill="#e6a200"/></svg>
<svg class="b" style="left:0;top:0" width="1080" height="438" viewBox="0 0 1080 438"><rect x="719.3" y="237.1" width="350.9000000000001" height="197.30" fill="#a030a8"/><rect x="720.4499999999999" y="237.1" width="348.6000000000001" height="196.15" fill="#000"/><rect x="719.3" y="237.1" width="350.9000000000001" height="2.3" fill="#e61fe0"/><rect x="719.1999999999999" y="220.9" width="86.7" height="17.1" fill="#e61fe0"/><rect x="721.3" y="223.0" width="82.8" height="14.100000000000001" fill="#3d3e45"/><rect x="719.1999999999999" y="236.0" width="86.7" height="2.1" fill="#e61fe0"/></svg>
<span class="t tab" style="top:224.90px;color:#ffffff;font-size:9.0px;line-height:10px;left:723.90px;letter-spacing:-0.619px;">F: Frame Summary</span>
<svg class="b" style="left:1048.15px;top:224.4px" width="22" height="12" viewBox="0 0 22 12"><path d="M2.85 5.4h5.4l-2.7 3.0z" fill="#dcdcdc"/><path d="M14.1 2.8l5.5 5.4M19.6 2.8l-5.5 5.4" stroke="#d6d6d6" stroke-width="1.0" fill="none"/></svg>
<div class="b" style="left:720px;top:240.2px;width:349px;height:21.5px;background:#3e3e40;"></div>
<div class="b" style="left:789.0px;top:240.2px;width:1px;height:21.5px;background:#5c5c5e;"></div>
<div class="b" style="left:824.2px;top:240.2px;width:1px;height:21.5px;background:#5c5c5e;"></div>
<div class="b" style="left:878.2px;top:240.2px;width:1px;height:21.5px;background:#5c5c5e;"></div>
<div class="b" style="left:921.1px;top:240.2px;width:1px;height:21.5px;background:#5c5c5e;"></div>
<div class="b" style="left:955.7px;top:240.2px;width:1px;height:21.5px;background:#5c5c5e;"></div>
<div class="b" style="left:991.1px;top:240.2px;width:1px;height:21.5px;background:#5c5c5e;"></div>
<div class="b" style="left:1025.8px;top:240.2px;width:1px;height:21.5px;background:#5c5c5e;"></div>
<div class="b" id="labels" style="left:0;top:0;width:1080px;height:438px;will-change:transform;">
<span class="t " style="top:25.00px;color:#dadada;font-size:8.8px;line-height:10px;left:50.00px;transform:scaleX(0.935);transform-origin:0 50%;">Rng 10 dBm</span>
<span class="t " style="top:34.70px;color:#dadada;font-size:8.8px;line-height:10px;right:1032.70px;text-align:right;transform:scaleX(0.935);transform-origin:100% 50%;">4</span>
<span class="t " style="top:80.40px;color:#dadada;font-size:8.8px;line-height:10px;right:1032.70px;text-align:right;transform:scaleX(0.935);transform-origin:100% 50%;">Const</span>
<span class="t " style="top:116.80px;color:#dadada;font-size:8.8px;line-height:10px;right:1032.70px;text-align:right;transform:scaleX(0.935);transform-origin:100% 50%;">800</span>
<span class="t " style="top:127.00px;color:#dadada;font-size:8.8px;line-height:10px;right:1032.70px;text-align:right;transform:scaleX(0.935);transform-origin:100% 50%;">m</span>
<span class="t " style="top:137.00px;color:#dadada;font-size:8.8px;line-height:10px;right:1032.70px;text-align:right;transform:scaleX(0.935);transform-origin:100% 50%;">/div</span>
<span class="t " style="top:172.80px;color:#dadada;font-size:8.8px;line-height:10px;right:1032.70px;text-align:right;transform:scaleX(0.935);transform-origin:100% 50%;">-4</span>
<span class="t " style="top:193.40px;color:#dadada;font-size:8.8px;line-height:10px;left:50.00px;transform:scaleX(0.935);transform-origin:0 50%;">-7.715</span>
<span class="t " style="top:203.50px;color:#dadada;font-size:8.8px;line-height:10px;left:50.00px;transform:scaleX(0.935);transform-origin:0 50%;">Res BW 15 kHz</span>
<span class="t " style="top:193.40px;color:#dadada;font-size:8.8px;line-height:10px;right:729.00px;text-align:right;transform:scaleX(0.935);transform-origin:100% 50%;">7.7153</span>
<span class="t " style="top:203.50px;color:#dadada;font-size:8.8px;line-height:10px;right:725.00px;text-align:right;transform:scaleX(0.935);transform-origin:100% 50%;">TimeLen 140  Sym</span>
<div class="b" style="left:365px;top:21.4px;width:338px;height:182.8px;overflow:hidden;">
<div class="b" style="left:-365px;top:-21.4px;width:1080px;height:438px;">
<span class="t " style="top:42.50px;color:#1f66c8;font-size:8.45px;line-height:10px;left:374.70px;transform:scaleX(0.965);transform-origin:0 50%;">Analyzed</span>
<span class="t " style="top:42.50px;color:#1f66c8;font-size:8.45px;line-height:10px;left:415.10px;transform:scaleX(0.965);transform-origin:0 50%;">Subframe</span>
<span class="t " style="top:42.50px;color:#1f66c8;font-size:8.45px;line-height:10px;left:473.70px;transform:scaleX(0.965);transform-origin:0 50%;">[Sf0,sym0]</span>
<span class="t " style="top:42.50px;color:#1f66c8;font-size:8.45px;line-height:10px;left:545.60px;transform:scaleX(0.965);transform-origin:0 50%;">to</span>
<span class="t " style="top:42.50px;color:#1f66c8;font-size:8.45px;line-height:10px;left:559.30px;transform:scaleX(0.965);transform-origin:0 50%;">[Sf9,sym13]</span>
<span class="t " style="top:52.66px;color:#1f66c8;font-size:8.45px;line-height:10px;left:374.70px;transform:scaleX(0.965);transform-origin:0 50%;">Channel</span>
<span class="t " style="top:52.66px;color:#1f66c8;font-size:8.45px;line-height:10px;left:410.90px;transform:scaleX(0.965);transform-origin:0 50%;">Power</span>
<span class="t " style="top:52.66px;color:#1f66c8;font-size:8.45px;line-height:10px;left:473.70px;transform:scaleX(0.965);transform-origin:0 50%;">44.577</span>
<span class="t " style="top:52.66px;color:#1f66c8;font-size:8.45px;line-height:10px;left:505.00px;transform:scaleX(0.965);transform-origin:0 50%;">dBm</span>
<span class="t " style="top:62.82px;color:#1f66c8;font-size:8.45px;line-height:10px;left:374.70px;transform:scaleX(0.965);transform-origin:0 50%;">OFDM</span>
<span class="t " style="top:62.82px;color:#1f66c8;font-size:8.45px;line-height:10px;left:397.70px;transform:scaleX(0.965);transform-origin:0 50%;">Sym.</span>
<span class="t " style="top:62.82px;color:#1f66c8;font-size:8.45px;line-height:10px;left:419.80px;transform:scaleX(0.965);transform-origin:0 50%;">Tx.</span>
<span class="t " style="top:62.82px;color:#1f66c8;font-size:8.45px;line-height:10px;left:437.70px;transform:scaleX(0.965);transform-origin:0 50%;">Power</span>
<span class="t " style="top:62.82px;color:#1f66c8;font-size:8.45px;line-height:10px;left:473.70px;transform:scaleX(0.965);transform-origin:0 50%;">44.901</span>
<span class="t " style="top:62.82px;color:#1f66c8;font-size:8.45px;line-height:10px;left:505.00px;transform:scaleX(0.965);transform-origin:0 50%;">dBm</span>
<span class="t " style="top:72.98px;color:#1f66c8;font-size:8.45px;line-height:10px;left:374.70px;transform:scaleX(0.965);transform-origin:0 50%;">EVM</span>
<span class="t " style="top:72.98px;color:#1f66c8;font-size:8.45px;line-height:10px;left:473.70px;transform:scaleX(0.965);transform-origin:0 50%;">-2.0597</span>
<span class="t " style="top:72.98px;color:#1f66c8;font-size:8.45px;line-height:10px;left:528.00px;transform:scaleX(0.965);transform-origin:0 50%;">dB</span>
<span class="t " style="top:83.14px;color:#1f66c8;font-size:8.45px;line-height:10px;left:374.70px;transform:scaleX(0.965);transform-origin:0 50%;">EVMPk</span>
<span class="t " style="top:83.14px;color:#1f66c8;font-size:8.45px;line-height:10px;left:473.70px;transform:scaleX(0.965);transform-origin:0 50%;">14.211</span>
<span class="t " style="top:83.14px;color:#1f66c8;font-size:8.45px;line-height:10px;left:528.00px;transform:scaleX(0.965);transform-origin:0 50%;">dB</span>
<span class="t " style="top:93.30px;color:#1f66c8;font-size:8.45px;line-height:10px;left:374.70px;transform:scaleX(0.965);transform-origin:0 50%;">Mag Err</span>
<span class="t " style="top:93.30px;color:#1f66c8;font-size:8.45px;line-height:10px;left:473.70px;transform:scaleX(0.965);transform-origin:0 50%;">45.87</span>
<span class="t " style="top:93.30px;color:#1f66c8;font-size:8.45px;line-height:10px;left:501.30px;transform:scaleX(0.965);transform-origin:0 50%;">%rms</span>
<span class="t " style="top:103.46px;color:#1f66c8;font-size:8.45px;line-height:10px;left:374.70px;transform:scaleX(0.965);transform-origin:0 50%;">Mag Err</span>
<span class="t " style="top:103.46px;color:#1f66c8;font-size:8.45px;line-height:10px;left:410.90px;transform:scaleX(0.965);transform-origin:0 50%;">Pk</span>
<span class="t " style="top:103.46px;color:#1f66c8;font-size:8.45px;line-height:10px;left:473.70px;transform:scaleX(0.965);transform-origin:0 50%;">357.25</span>
<span class="t " style="top:103.46px;color:#1f66c8;font-size:8.45px;line-height:10px;left:505.20px;transform:scaleX(0.965);transform-origin:0 50%;">%pk</span>
<span class="t " style="top:113.62px;color:#1f66c8;font-size:8.45px;line-height:10px;left:374.70px;transform:scaleX(0.965);transform-origin:0 50%;">Phase</span>
<span class="t " style="top:113.62px;color:#1f66c8;font-size:8.45px;line-height:10px;left:401.70px;transform:scaleX(0.965);transform-origin:0 50%;">Err</span>
<span class="t " style="top:113.62px;color:#1f66c8;font-size:8.45px;line-height:10px;left:473.70px;transform:scaleX(0.965);transform-origin:0 50%;">0.6424</span>
<span class="t " style="top:113.62px;color:#1f66c8;font-size:8.45px;line-height:10px;left:505.20px;transform:scaleX(0.965);transform-origin:0 50%;">deg</span>
<span class="t " style="top:123.78px;color:#1f66c8;font-size:8.45px;line-height:10px;left:374.70px;transform:scaleX(0.965);transform-origin:0 50%;">Phase</span>
<span class="t " style="top:123.78px;color:#1f66c8;font-size:8.45px;line-height:10px;left:401.70px;transform:scaleX(0.965);transform-origin:0 50%;">Err</span>
<span class="t " style="top:123.78px;color:#1f66c8;font-size:8.45px;line-height:10px;left:420.00px;transform:scaleX(0.965);transform-origin:0 50%;">Pk</span>
<span class="t " style="top:123.78px;color:#1f66c8;font-size:8.45px;line-height:10px;left:473.70px;transform:scaleX(0.965);transform-origin:0 50%;">3.1415</span>
<span class="t " style="top:123.78px;color:#1f66c8;font-size:8.45px;line-height:10px;left:505.20px;transform:scaleX(0.965);transform-origin:0 50%;">deg</span>
<span class="t " style="top:133.94px;color:#1f66c8;font-size:8.45px;line-height:10px;left:374.70px;transform:scaleX(0.965);transform-origin:0 50%;">Frequency</span>
<span class="t " style="top:133.94px;color:#1f66c8;font-size:8.45px;line-height:10px;left:420.00px;transform:scaleX(0.965);transform-origin:0 50%;">Error</span>
<span class="t " style="top:133.94px;color:#1f66c8;font-size:8.45px;line-height:10px;left:473.70px;transform:scaleX(0.965);transform-origin:0 50%;">-23.522</span>
<span class="t " style="top:133.94px;color:#1f66c8;font-size:8.45px;line-height:10px;left:510.20px;transform:scaleX(0.965);transform-origin:0 50%;">Hz</span>
<span class="t " style="top:144.10px;color:#1f66c8;font-size:8.45px;line-height:10px;left:374.70px;transform:scaleX(0.965);transform-origin:0 50%;">Symbol</span>
<span class="t " style="top:144.10px;color:#1f66c8;font-size:8.45px;line-height:10px;left:406.30px;transform:scaleX(0.965);transform-origin:0 50%;">Clock</span>
<span class="t " style="top:144.10px;color:#1f66c8;font-size:8.45px;line-height:10px;left:433.00px;transform:scaleX(0.965);transform-origin:0 50%;">Error</span>
<span class="t " style="top:144.10px;color:#1f66c8;font-size:8.45px;line-height:10px;left:473.70px;transform:scaleX(0.965);transform-origin:0 50%;">0.0096</span>
<span class="t " style="top:144.10px;color:#1f66c8;font-size:8.45px;line-height:10px;left:505.20px;transform:scaleX(0.965);transform-origin:0 50%;">ppm</span>
<span class="t " style="top:154.26px;color:#1f66c8;font-size:8.45px;line-height:10px;left:374.70px;transform:scaleX(0.965);transform-origin:0 50%;">IQ</span>
<span class="t " style="top:154.26px;color:#1f66c8;font-size:8.45px;line-height:10px;left:388.40px;transform:scaleX(0.965);transform-origin:0 50%;">Offset</span>
<span class="t " style="top:154.26px;color:#1f66c8;font-size:8.45px;line-height:10px;left:473.70px;transform:scaleX(0.965);transform-origin:0 50%;">-35.766</span>
<span class="t " style="top:154.26px;color:#1f66c8;font-size:8.45px;line-height:10px;left:510.20px;transform:scaleX(0.965);transform-origin:0 50%;">dB</span>
<span class="t " style="top:164.42px;color:#1f66c8;font-size:8.45px;line-height:10px;left:374.70px;transform:scaleX(0.965);transform-origin:0 50%;">IQ</span>
<span class="t " style="top:164.42px;color:#1f66c8;font-size:8.45px;line-height:10px;left:388.40px;transform:scaleX(0.965);transform-origin:0 50%;">Gain</span>
<span class="t " style="top:164.42px;color:#1f66c8;font-size:8.45px;line-height:10px;left:410.90px;transform:scaleX(0.965);transform-origin:0 50%;">Imbalance</span>
<span class="t " style="top:164.42px;color:#1f66c8;font-size:8.45px;line-height:10px;left:473.70px;transform:scaleX(0.965);transform-origin:0 50%;">***</span>
<span class="t " style="top:174.58px;color:#1f66c8;font-size:8.45px;line-height:10px;left:374.70px;transform:scaleX(0.965);transform-origin:0 50%;">IQ</span>
<span class="t " style="top:174.58px;color:#1f66c8;font-size:8.45px;line-height:10px;left:388.40px;transform:scaleX(0.965);transform-origin:0 50%;">Quad Error</span>
<span class="t " style="top:174.58px;color:#1f66c8;font-size:8.45px;line-height:10px;left:473.70px;transform:scaleX(0.965);transform-origin:0 50%;">***</span>
<span class="t " style="top:184.74px;color:#1f66c8;font-size:8.45px;line-height:10px;left:374.70px;transform:scaleX(0.965);transform-origin:0 50%;">IQ</span>
<span class="t " style="top:184.74px;color:#1f66c8;font-size:8.45px;line-height:10px;left:388.40px;transform:scaleX(0.965);transform-origin:0 50%;">Timing</span>
<span class="t " style="top:184.74px;color:#1f66c8;font-size:8.45px;line-height:10px;left:420.00px;transform:scaleX(0.965);transform-origin:0 50%;">Skew</span>
<span class="t " style="top:184.74px;color:#1f66c8;font-size:8.45px;line-height:10px;left:473.70px;transform:scaleX(0.965);transform-origin:0 50%;">***</span>
<span class="t " style="top:194.90px;color:#1f66c8;font-size:8.45px;line-height:10px;left:375.30px;transform:scaleX(0.965);transform-origin:0 50%;">Time</span>
<span class="t " style="top:194.90px;color:#1f66c8;font-size:8.45px;line-height:10px;left:397.30px;transform:scaleX(0.965);transform-origin:0 50%;">Offset</span>
<span class="t " style="top:194.90px;color:#1f66c8;font-size:8.45px;line-height:10px;left:473.70px;transform:scaleX(0.965);transform-origin:0 50%;">8.3211</span>
<span class="t " style="top:194.90px;color:#1f66c8;font-size:8.45px;line-height:10px;left:510.20px;transform:scaleX(0.965);transform-origin:0 50%;">ms</span>
</div></div>
<span class="t " style="top:34.00px;color:#dadada;font-size:8.8px;line-height:10px;right:323.00px;text-align:right;transform:scaleX(0.935);transform-origin:100% 50%;">1.64</span>
<span class="t " style="top:45.00px;color:#dadada;font-size:8.8px;line-height:10px;right:323.00px;text-align:right;transform:scaleX(0.935);transform-origin:100% 50%;">kcarriers</span>
<span class="t " style="top:80.30px;color:#dadada;font-size:8.8px;line-height:10px;right:323.00px;text-align:right;transform:scaleX(0.935);transform-origin:100% 50%;">Real</span>
<span class="t " style="top:117.00px;color:#dadada;font-size:8.8px;line-height:10px;right:323.00px;text-align:right;transform:scaleX(0.935);transform-origin:100% 50%;">328</span>
<span class="t " style="top:127.00px;color:#dadada;font-size:8.8px;line-height:10px;right:323.00px;text-align:right;transform:scaleX(0.935);transform-origin:100% 50%;">carriers</span>
<span class="t " style="top:137.00px;color:#dadada;font-size:8.8px;line-height:10px;right:323.00px;text-align:right;transform:scaleX(0.935);transform-origin:100% 50%;">/div</span>
<span class="t " style="top:173.20px;color:#dadada;font-size:8.8px;line-height:10px;right:323.00px;text-align:right;transform:scaleX(0.935);transform-origin:100% 50%;">-1.64</span>
<span class="t " style="top:183.30px;color:#dadada;font-size:8.8px;line-height:10px;right:323.00px;text-align:right;transform:scaleX(0.935);transform-origin:100% 50%;">kcarriers</span>
<span class="t " style="top:193.80px;color:#dadada;font-size:8.8px;line-height:10px;left:760.00px;transform:scaleX(0.935);transform-origin:0 50%;">Start 0  sym</span>
<span class="t " style="top:193.80px;color:#dadada;font-size:8.8px;line-height:10px;right:15.70px;text-align:right;transform:scaleX(0.935);transform-origin:100% 50%;">Stop 139  sym</span>
<span class="t " style="top:242.20px;color:#dadada;font-size:8.8px;line-height:10px;left:50.00px;transform:scaleX(0.935);transform-origin:0 50%;">Rng 10 dBm</span>
<span class="t " style="top:251.80px;color:#dadada;font-size:8.8px;line-height:10px;right:1032.70px;text-align:right;transform:scaleX(0.935);transform-origin:100% 50%;">20</span>
<span class="t " style="top:262.20px;color:#dadada;font-size:8.8px;line-height:10px;right:1032.70px;text-align:right;transform:scaleX(0.935);transform-origin:100% 50%;">dBm</span>
<span class="t " style="top:298.20px;color:#dadada;font-size:8.8px;line-height:10px;right:1032.70px;text-align:right;transform:scaleX(0.935);transform-origin:100% 50%;">LogMag</span>
<span class="t " style="top:334.60px;color:#dadada;font-size:8.8px;line-height:10px;right:1032.70px;text-align:right;transform:scaleX(0.935);transform-origin:100% 50%;">10</span>
<span class="t " style="top:345.00px;color:#dadada;font-size:8.8px;line-height:10px;right:1032.70px;text-align:right;transform:scaleX(0.935);transform-origin:100% 50%;">dB</span>
<span class="t " style="top:355.00px;color:#dadada;font-size:8.8px;line-height:10px;right:1032.70px;text-align:right;transform:scaleX(0.935);transform-origin:100% 50%;">/div</span>
<span class="t " style="top:390.00px;color:#dadada;font-size:8.8px;line-height:10px;right:1032.70px;text-align:right;transform:scaleX(0.935);transform-origin:100% 50%;">-80</span>
<span class="t " style="top:399.80px;color:#dadada;font-size:8.8px;line-height:10px;right:1032.70px;text-align:right;transform:scaleX(0.935);transform-origin:100% 50%;">dBm</span>
<span class="t " style="top:421.00px;color:#dadada;font-size:8.8px;line-height:10px;left:50.00px;transform:scaleX(0.935);transform-origin:0 50%;">Res BW 381.936  Hz</span>
<span class="t " style="top:421.00px;color:#dadada;font-size:8.8px;line-height:10px;right:725.00px;text-align:right;transform:scaleX(0.935);transform-origin:100% 50%;">TimeLen 10 mSec</span>
<span class="t " style="top:242.20px;color:#dadada;font-size:8.8px;line-height:10px;left:404.50px;transform:scaleX(0.935);transform-origin:0 50%;">Rng 10 dBm</span>
<span class="t " style="top:251.80px;color:#dadada;font-size:8.8px;line-height:10px;right:677.50px;text-align:right;transform:scaleX(0.935);transform-origin:100% 50%;">5</span>
<span class="t " style="top:262.20px;color:#dadada;font-size:8.8px;line-height:10px;right:677.50px;text-align:right;transform:scaleX(0.935);transform-origin:100% 50%;">%</span>
<span class="t " style="top:298.20px;color:#dadada;font-size:8.8px;line-height:10px;right:677.50px;text-align:right;transform:scaleX(0.935);transform-origin:100% 50%;">LinMag</span>
<span class="t " style="top:334.60px;color:#dadada;font-size:8.8px;line-height:10px;right:677.50px;text-align:right;transform:scaleX(0.935);transform-origin:100% 50%;">500</span>
<span class="t " style="top:345.00px;color:#dadada;font-size:8.8px;line-height:10px;right:677.50px;text-align:right;transform:scaleX(0.935);transform-origin:100% 50%;">m%</span>
<span class="t " style="top:355.00px;color:#dadada;font-size:8.8px;line-height:10px;right:677.50px;text-align:right;transform:scaleX(0.935);transform-origin:100% 50%;">/div</span>
<span class="t " style="top:390.00px;color:#dadada;font-size:8.8px;line-height:10px;right:677.50px;text-align:right;transform:scaleX(0.935);transform-origin:100% 50%;">0</span>
<span class="t " style="top:399.80px;color:#dadada;font-size:8.8px;line-height:10px;right:677.50px;text-align:right;transform:scaleX(0.935);transform-origin:100% 50%;">%</span>
<span class="t " style="top:421.00px;color:#dadada;font-size:8.8px;line-height:10px;left:404.80px;transform:scaleX(0.935);transform-origin:0 50%;">Res BW 15 kHz</span>
<span class="t " style="top:421.00px;color:#dadada;font-size:8.8px;line-height:10px;right:370.80px;text-align:right;transform:scaleX(0.935);transform-origin:100% 50%;">TimeLen 140  Sym</span>
<span class="t " style="top:246.30px;color:#f0f0f0;font-size:8.8px;line-height:10px;left:721.80px;transform:scaleX(0.935);transform-origin:0 50%;">Name</span>
<span class="t " style="top:241.20px;color:#f0f0f0;font-size:8.8px;line-height:10px;left:791.00px;transform:scaleX(0.935);transform-origin:0 50%;">EVM</span>
<span class="t " style="top:251.20px;color:#f0f0f0;font-size:8.8px;line-height:10px;left:791.00px;transform:scaleX(0.935);transform-origin:0 50%;">(dB)</span>
<span class="t " style="top:241.20px;color:#f0f0f0;font-size:8.8px;line-height:10px;left:826.00px;transform:scaleX(0.935);transform-origin:0 50%;">Power per RE</span>
<span class="t " style="top:251.20px;color:#f0f0f0;font-size:8.8px;line-height:10px;left:826.00px;transform:scaleX(0.935);transform-origin:0 50%;">(dBm)</span>
<span class="t " style="top:246.30px;color:#f0f0f0;font-size:8.8px;line-height:10px;left:880.00px;transform:scaleX(0.935);transform-origin:0 50%;">Modulation</span>
<span class="t " style="top:241.20px;color:#f0f0f0;font-size:8.8px;line-height:10px;left:922.60px;transform:scaleX(0.935);transform-origin:0 50%;">Num. of</span>
<span class="t " style="top:251.20px;color:#f0f0f0;font-size:8.8px;line-height:10px;left:922.60px;transform:scaleX(0.935);transform-origin:0 50%;">RBs</span>
<span class="t " style="top:246.30px;color:#f0f0f0;font-size:8.8px;line-height:10px;left:957.70px;transform:scaleX(0.935);transform-origin:0 50%;">RNTI</span>
<span class="t " style="top:246.30px;color:#f0f0f0;font-size:8.8px;line-height:10px;left:992.90px;transform:scaleX(0.935);transform-origin:0 50%;">BWP ID</span>
<span class="t " style="top:262.70px;color:#d89000;font-size:8.7px;line-height:10px;right:294.00px;text-align:right;transform:scaleX(0.965);transform-origin:100% 50%;">PUSCH0</span>
<span class="t " style="top:262.70px;color:#d89000;font-size:8.7px;line-height:10px;right:259.60px;text-align:right;transform:scaleX(0.965);transform-origin:100% 50%;">-4.21</span>
<span class="t " style="top:262.70px;color:#d89000;font-size:8.7px;line-height:10px;right:205.60px;text-align:right;transform:scaleX(0.965);transform-origin:100% 50%;">9.80</span>
<span class="t " style="top:262.70px;color:#d89000;font-size:8.7px;line-height:10px;right:163.00px;text-align:right;transform:scaleX(0.965);transform-origin:100% 50%;">QPSK</span>
<span class="t " style="top:262.70px;color:#d89000;font-size:8.7px;line-height:10px;right:127.80px;text-align:right;transform:scaleX(0.965);transform-origin:100% 50%;">2700</span>
<span class="t " style="top:262.70px;color:#d89000;font-size:8.7px;line-height:10px;right:92.90px;text-align:right;transform:scaleX(0.965);transform-origin:100% 50%;">0x0</span>
<span class="t " style="top:262.70px;color:#d89000;font-size:8.7px;line-height:10px;right:57.50px;text-align:right;transform:scaleX(0.965);transform-origin:100% 50%;">0</span>
<span class="t " style="top:274.80px;color:#1496c8;font-size:8.7px;line-height:10px;right:294.00px;text-align:right;transform:scaleX(0.965);transform-origin:100% 50%;">PUSCH0_DMRS</span>
<span class="t " style="top:274.80px;color:#1496c8;font-size:8.7px;line-height:10px;right:259.60px;text-align:right;transform:scaleX(0.965);transform-origin:100% 50%;">4.40</span>
<span class="t " style="top:274.80px;color:#1496c8;font-size:8.7px;line-height:10px;right:205.60px;text-align:right;transform:scaleX(0.965);transform-origin:100% 50%;">9.80</span>
<span class="t " style="top:274.80px;color:#1496c8;font-size:8.7px;line-height:10px;right:163.00px;text-align:right;transform:scaleX(0.965);transform-origin:100% 50%;">QPSK</span>
<span class="t " style="top:274.80px;color:#1496c8;font-size:8.7px;line-height:10px;right:127.80px;text-align:right;transform:scaleX(0.965);transform-origin:100% 50%;">2700</span>
<span class="t " style="top:274.80px;color:#1496c8;font-size:8.7px;line-height:10px;right:92.90px;text-align:right;transform:scaleX(0.965);transform-origin:100% 50%;">0x0</span>
<span class="t " style="top:274.80px;color:#1496c8;font-size:8.7px;line-height:10px;right:57.50px;text-align:right;transform:scaleX(0.965);transform-origin:100% 50%;">0</span>
</div>
<div class="b" id="labels2" style="left:0;top:0;width:1080px;height:438px;will-change:transform;transform:translateY(0.5px) rotate(0.001deg);">
<span class="t " style="top:410.20px;color:#dadada;font-size:8.8px;line-height:10px;left:50.00px;transform:scaleX(0.935);transform-origin:0 50%;">Center 1 GHz</span>
<span class="t " style="top:410.20px;color:#dadada;font-size:8.8px;line-height:10px;right:725.00px;text-align:right;transform:scaleX(0.935);transform-origin:100% 50%;">Span 96 MHz</span>
<span class="t " style="top:410.20px;color:#dadada;font-size:8.8px;line-height:10px;left:404.80px;transform:scaleX(0.935);transform-origin:0 50%;">Start -1.62 kcarrier</span>
<span class="t " style="top:410.20px;color:#dadada;font-size:8.8px;line-height:10px;right:370.80px;text-align:right;transform:scaleX(0.935);transform-origin:100% 50%;">Stop 1.619 kcarrier</span>
</div>
</body></html>
